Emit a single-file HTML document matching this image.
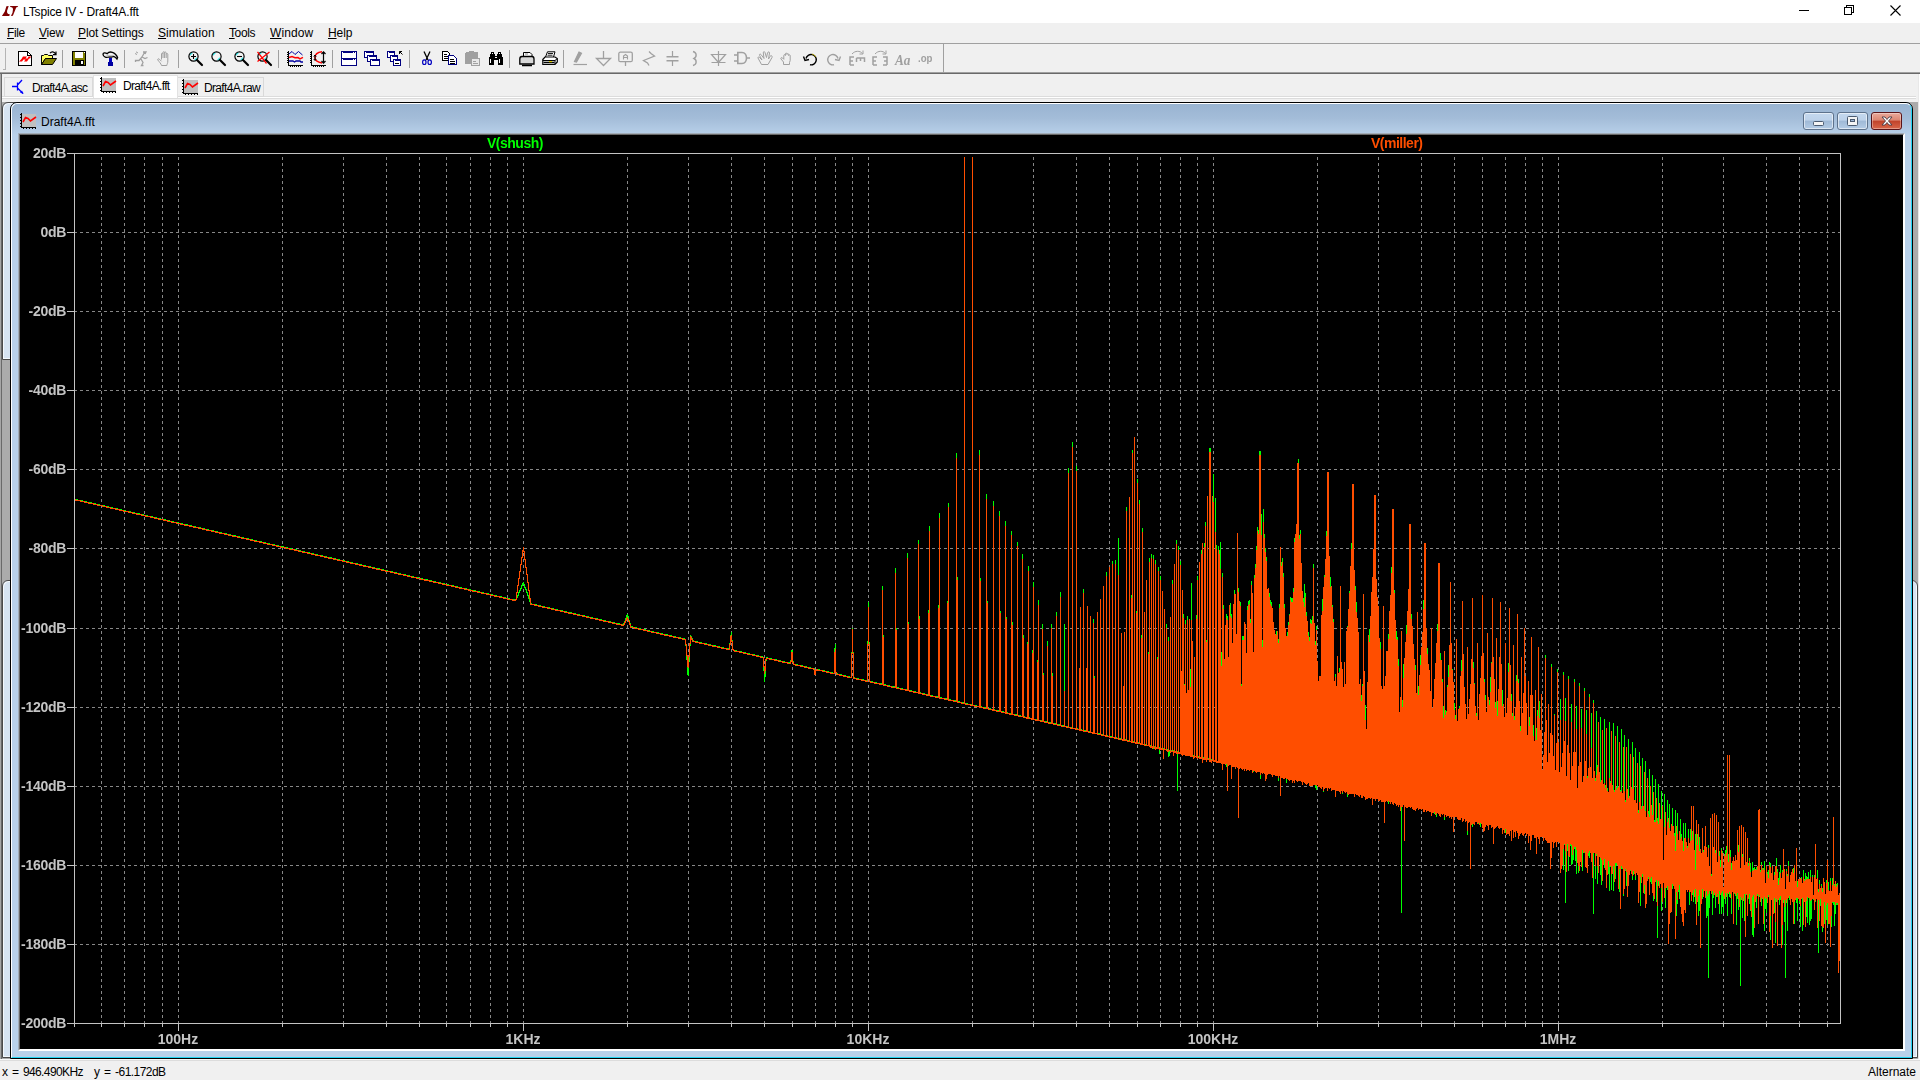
<!DOCTYPE html>
<html><head><meta charset="utf-8"><title>LTspice IV - Draft4A.fft</title>
<style>
*{box-sizing:border-box;margin:0;padding:0}
html,body{width:1920px;height:1080px;overflow:hidden;background:#f0f0f0;font-family:"Liberation Sans",sans-serif;}
body{position:relative}
.abs{position:absolute}
.ic{position:absolute;overflow:visible}
#title{position:absolute;left:0;top:0;width:1920px;height:23px;background:#fff}
#title .t{position:absolute;left:23px;top:5px;font-size:12px;line-height:14px;color:#000;white-space:nowrap;letter-spacing:-0.13px}
#menu{position:absolute;left:0;top:23px;width:1920px;height:20px;background:#f0f0f0;font-size:12px;color:#000}
#menu span{position:absolute;top:3px;line-height:14px;white-space:nowrap}
#menu u{text-decoration:underline;text-underline-offset:1px}
#tb{position:absolute;left:0;top:43px;width:1920px;height:31px;background:#f0f0f0;border-top:1px solid #a0a0a0;border-bottom:1px solid #696969}
#tbl{position:absolute;left:0;top:72px;width:1920px;height:1px;background:#a0a0a0}
.sep{position:absolute;top:50px;width:1px;height:18px;background:#a0a0a0}
#grip{position:absolute;left:5px;top:48px;width:1px;height:22px;background:#b4b4b4}
#grip2{position:absolute;left:3px;top:69px;width:3px;height:1px;background:#b4b4b4}
#tbend{position:absolute;left:943px;top:44px;width:1px;height:29px;background:#a0a0a0}
#tabs{position:absolute;left:2px;top:74px;width:1916px;height:28px;background:#f0f0f0}
.tab{position:absolute;top:77px;height:20px;border:1px solid #d9d9d9;background:#f0f0f0;font-size:12px;letter-spacing:-0.66px;color:#000;white-space:nowrap}
.tab span{position:absolute;top:3px;line-height:14px}
.tab.sel{top:75px;height:23px;background:#fff;border-bottom:none;border-color:#e2e2e2}
#ledge0{position:absolute;left:0;top:74px;width:1px;height:987px;background:#a6a6a6}
#ledge1{position:absolute;left:1px;top:74px;width:1px;height:987px;background:#696969}
#redge{position:absolute;left:1918px;top:74px;width:2px;height:987px;background:#fff;border-left:1px solid #e8e8e8}
#mdi{position:absolute;left:2px;top:102px;width:1916px;height:957px;background:#ababab}
#bline{position:absolute;left:0;top:1059px;width:1920px;height:2px;background:#fafafa;border-bottom:1px solid #dcdcdc}
#status{position:absolute;left:0;top:1061px;width:1920px;height:19px;background:#f0f0f0;font-size:12px;color:#000}
#status span{position:absolute;top:4px;line-height:14px;white-space:nowrap}
.bw{position:absolute;border:1px solid #4a4a4a;border-radius:6px 6px 0 0;background:#d7e4f2;box-shadow:inset 1px 1px 0 #f4f8fc,inset -1px -1px 0 #f4f8fc}
#cw{position:absolute;left:10px;top:102px;width:1903px;height:957px;border:1px solid #000;border-radius:7px 7px 0 0;background:#b9d1ea;overflow:hidden}
#cw .hl{position:absolute;left:0;top:0;width:1901px;height:955px;border-left:1px solid #fff;border-top:1px solid #fff;border-right:1px solid #22d4f2;border-bottom:1px solid #22d4f2;border-radius:6px 6px 0 0}
#cap{position:absolute;left:1px;top:1px;width:1899px;height:31px;background:linear-gradient(#99b4d1,#a3bcd8 45%,#b9d1ea);border-radius:5px 5px 0 0}
#cap .ct{position:absolute;left:29px;top:11px;font-size:12px;line-height:14px;color:#000;white-space:nowrap}
#cedge{position:absolute;left:7px;top:30px;width:1887px;height:918px;border-left:1px solid #a3adb8;border-top:1px solid #a3adb8;border-right:1px solid #fff;border-bottom:1px solid #fff}
#cedge2{position:absolute;left:8px;top:31px;width:1885px;height:916px;border-left:1px solid #696969;border-top:1px solid #696969;border-right:1px solid #fff;border-bottom:1px solid #fff;background:#000}
.cb{position:absolute;top:112px;width:31px;height:18px;border:1px solid #5d728c;border-radius:3px;background:linear-gradient(#c4d8ee 0%,#bdd2ea 45%,#9fb9d6 50%,#b4cce6 100%);box-shadow:inset 0 0 0 1px rgba(255,255,255,.55)}
.cb.x{border-color:#5a1418;background:linear-gradient(#eaa99b 0%,#dc8672 45%,#c0432a 50%,#d9674a 100%);box-shadow:inset 0 0 0 1px rgba(255,255,255,.35)}
.plot{position:absolute;left:20px;top:135px}
.yl{position:absolute;left:0;width:66px;text-align:right;font-size:14px;font-weight:bold;color:#c4c4c4;line-height:16px;height:16px;white-space:nowrap;letter-spacing:-0.3px;will-change:transform}
.xl{position:absolute;top:1031px;width:80px;text-align:center;font-size:14px;font-weight:bold;color:#c4c4c4;line-height:16px;white-space:nowrap;letter-spacing:0;will-change:transform}
.tl{position:absolute;top:135px;font-size:14px;font-weight:bold;line-height:16px;white-space:nowrap;letter-spacing:-0.5px;will-change:transform}

</style></head>
<body>
<div id="title">
<svg class="ic" style="left:0px;top:0px" width="22" height="22" viewBox="0 0 22 22"><path d="M6.4 6.2L8.7 6L7.1 10.8C6.7 13 7.8 14.5 9.8 14.3L9.3 16H1.9L4.8 11.6Z" fill="#800000"/><path d="M10.4 6.1H18.2L17.5 7.1L16.2 7.5L12.9 15.7L10.9 16L12.5 12.8L13 9.2C12.9 7.6 11.6 6.9 10 7.1Z" fill="#800000"/></svg>
<div class="t">LTspice IV - Draft4A.fft</div>
<svg class="ic" style="left:1799px;top:10px" width="10" height="1" viewBox="0 0 10 1" shape-rendering="crispEdges"><rect width="10" height="1" fill="#000"/></svg>
<svg class="ic" style="left:1844px;top:5px" width="10" height="10" viewBox="0 0 10 10" shape-rendering="crispEdges"><path d="M2.5 2.5V0.5H9.5V7.5H7.5" fill="none" stroke="#000"/><rect x="0.5" y="2.5" width="7" height="7" fill="#fff" stroke="#000"/></svg>
<svg class="ic" style="left:1890px;top:5px" width="11" height="11" viewBox="0 0 11 11"><path d="M0.5 0.5L10.5 10.5M10.5 0.5L0.5 10.5" stroke="#000" stroke-width="1.1" fill="none"/></svg>
</div>
<div id="menu"><span style="left:7px;letter-spacing:-0.4px"><u>F</u>ile</span><span style="left:39px;letter-spacing:-0.25px"><u>V</u>iew</span><span style="left:78px;letter-spacing:-0.13px"><u>P</u>lot Settings</span><span style="left:158px;letter-spacing:0.06px"><u>S</u>imulation</span><span style="left:229px;letter-spacing:-0.4px"><u>T</u>ools</span><span style="left:270px;letter-spacing:0.1px"><u>W</u>indow</span><span style="left:328px;letter-spacing:-0.1px"><u>H</u>elp</span></div>
<div id="tb"></div><div id="tbl"></div><div id="grip"></div><div id="grip2"></div><div id="tbend"></div>
<svg class="ic" style="left:18px;top:51px" width="16" height="16" viewBox="0 0 16 16" shape-rendering="crispEdges"><path d="M0.5 0.5H9.5L13.5 4.5V14.5H0.5Z" fill="#fff" stroke="#000"/><path d="M9.5 0.5V4.5H13.5" fill="none" stroke="#000"/><path d="M1 10.5L3.5 8L5 5.5H9L7.5 7.5H9.5L10.5 5.5H13L12 7.5H11L9 10.5H6L7.5 8.5H5.5L4 10.5Z" fill="#f00" shape-rendering="geometricPrecision"/></svg>
<svg class="ic" style="left:41px;top:51px" width="16" height="16" viewBox="0 0 16 16" shape-rendering="crispEdges"><path d="M0.5 4.5H2.5L3.5 3.5H6.5L7.5 4.5H11.5V7.5H4.5L0.5 13.5Z" fill="#ffff60" stroke="#000" shape-rendering="geometricPrecision"/><path d="M0.5 13.5L4.5 7.5H15.5L11.5 13.5Z" fill="#808000" stroke="#000" shape-rendering="geometricPrecision"/><path d="M9 2.2C10.5 0.2 13 0.4 14.6 3M15 0.6V3.6H12" fill="none" stroke="#000" stroke-width="1.2" shape-rendering="geometricPrecision"/></svg>
<div class="sep" style="left:62px"></div>
<svg class="ic" style="left:72px;top:51px" width="16" height="16" viewBox="0 0 16 16" shape-rendering="crispEdges"><rect x="0.5" y="0.5" width="13" height="14" fill="#808000" stroke="#000"/><rect x="3" y="1" width="8" height="6" fill="#fff"/><rect x="3" y="9" width="9" height="5" fill="#000"/><rect x="9" y="10" width="2" height="3" fill="#fff"/><rect x="12" y="1" width="1" height="1" fill="#fff"/></svg>
<div class="sep" style="left:93px"></div>
<svg class="ic" style="left:102px;top:51px" width="16" height="16" viewBox="0 0 16 16" shape-rendering="crispEdges"><path d="M1 3.2C1.2 1.6 3.2 1.6 5.2 2.6C7.6 -0.2 13.2 0.6 15.6 6.6L15 8C13 5.4 11 5 9.8 6H6.8C4.8 6.8 1.2 6.4 1 3.2Z" fill="#f0f0f0" stroke="#000" stroke-width="1.3" shape-rendering="geometricPrecision"/><path d="M4.5 4.8H11" stroke="#b0b0b0" stroke-width="1" shape-rendering="geometricPrecision"/><rect x="7" y="7" width="3" height="5" fill="#0000c0"/><rect x="6" y="11" width="5" height="4" fill="#0000a0"/></svg>
<div class="sep" style="left:124px"></div>
<svg class="ic" style="left:134px;top:51px" width="16" height="16" viewBox="0 0 16 16" shape-rendering="crispEdges"><g fill="none" stroke="#a0a0a0" stroke-width="1.3" shape-rendering="geometricPrecision"><path d="M10.5 1.5L8 6L5 9.5H1.5V11M8 6L11 7.5L13.5 6.5M7 8L9 11.5L7.5 14.5H9.5M9 1H12L11 3"/><path d="M1 2.5L3 3.5M2 0.8L4 2" stroke-width="1"/></g></svg>
<svg class="ic" style="left:157px;top:51px" width="16" height="16" viewBox="0 0 16 16"><path d="M4.5 8.5V3C4.5 1.8 6 1.8 6 3V7M6 3V1.5C6 0.4 7.6 0.4 7.6 1.5V7M7.6 2V1.8C7.6 0.8 9.2 0.8 9.2 2V7M9.2 3.2C9.2 2.2 10.8 2.2 10.8 3.2V10C10.8 12.5 10 13 9.8 14.5H4.5C4.3 13 2 10.5 0.8 9C0.3 8 1.5 7.3 2.4 8.2L4.5 10.3" fill="none" stroke="#a0a0a0" stroke-width="1" shape-rendering="geometricPrecision"/></svg>
<div class="sep" style="left:178px"></div>
<svg class="ic" style="left:188px;top:51px" width="16" height="16" viewBox="0 0 16 16"><g shape-rendering="geometricPrecision"><circle cx="5.5" cy="5.5" r="4.6" fill="#f4f4f4" stroke="#000" stroke-width="1.2"/><path d="M2.2 4.2A3.6 3.6 0 0 1 4.4 2.1M8.8 6.8A3.6 3.6 0 0 1 6.6 8.9" stroke="#20e0e0" stroke-width="1.1" fill="none"/><path d="M9 9L14 14" stroke="#000" stroke-width="2.2" stroke-linecap="round"/><path d="M3 5.5H8M5.5 3V8" stroke="#000" stroke-width="1.1"/></g></svg>
<svg class="ic" style="left:211px;top:51px" width="16" height="16" viewBox="0 0 16 16"><g shape-rendering="geometricPrecision"><circle cx="5.5" cy="5.5" r="4.6" fill="#f4f4f4" stroke="#000" stroke-width="1.2"/><path d="M2.2 4.2A3.6 3.6 0 0 1 4.4 2.1M8.8 6.8A3.6 3.6 0 0 1 6.6 8.9" stroke="#20e0e0" stroke-width="1.1" fill="none"/><path d="M9 9L14 14" stroke="#000" stroke-width="2.2" stroke-linecap="round"/></g></svg>
<svg class="ic" style="left:234px;top:51px" width="16" height="16" viewBox="0 0 16 16"><g shape-rendering="geometricPrecision"><circle cx="5.5" cy="5.5" r="4.6" fill="#f4f4f4" stroke="#000" stroke-width="1.2"/><path d="M2.2 4.2A3.6 3.6 0 0 1 4.4 2.1M8.8 6.8A3.6 3.6 0 0 1 6.6 8.9" stroke="#20e0e0" stroke-width="1.1" fill="none"/><path d="M9 9L14 14" stroke="#000" stroke-width="2.2" stroke-linecap="round"/><path d="M3 5.5H8" stroke="#000" stroke-width="1.1"/></g></svg>
<svg class="ic" style="left:257px;top:51px" width="16" height="16" viewBox="0 0 16 16"><g shape-rendering="geometricPrecision"><circle cx="5.5" cy="5.5" r="4.6" fill="#f4f4f4" stroke="#000" stroke-width="1.2"/><path d="M2.2 4.2A3.6 3.6 0 0 1 4.4 2.1M8.8 6.8A3.6 3.6 0 0 1 6.6 8.9" stroke="#20e0e0" stroke-width="1.1" fill="none"/><path d="M9 9L14 14" stroke="#000" stroke-width="2.2" stroke-linecap="round"/><path d="M0.5 0.8L9.5 12.5M0.5 10.5L12.5 1" stroke="#f00" stroke-width="1.3"/></g></svg>
<div class="sep" style="left:278px"></div>
<svg class="ic" style="left:287px;top:51px" width="16" height="16" viewBox="0 0 16 16" shape-rendering="crispEdges"><path d="M1.5 0V14.5H16M0 1.5H1M0 3.5H1M0 5.5H1M0 7.5H1M0 9.5H1M0 11.5H1M3.5 15V16M5.5 15V16M7.5 15V16M9.5 15V16M11.5 15V16M13.5 15V16" stroke="#000" fill="none"/><g shape-rendering="geometricPrecision" fill="none"><path d="M2 3L5 0.5L8 3.5L11.5 0.5L15.5 4" stroke="#0000a0" stroke-width="1"/><path d="M2 6.5L5 5.5L8 6.8L11 6.5L13 7.8L16 6.3" stroke="#f00" stroke-width="1.5"/><path d="M2 10H6L7.5 11L9 10H13L14 11H16" stroke="#0000a0" stroke-width="1.3"/></g></svg>
<svg class="ic" style="left:310px;top:51px" width="16" height="16" viewBox="0 0 16 16" shape-rendering="crispEdges"><path d="M1.5 0V14.5H16M0 1.5H1M0 3.5H1M0 5.5H1M0 7.5H1M0 9.5H1M0 11.5H1M3.5 15V16M5.5 15V16M7.5 15V16M9.5 15V16M11.5 15V16M13.5 15V16" stroke="#000" fill="none"/><g shape-rendering="geometricPrecision" fill="none"><path d="M12 0.8C6 1.5 5 5 5 6.5C5 8 6 11 12 12" stroke="#f00" stroke-width="1.4"/><path d="M13.5 1V12M11.5 3L13.5 0.8L15.5 3M11.5 10L13.5 12.2L15.5 10" stroke="#000" stroke-width="1.2"/><path d="M5 4.5V9M3.8 5.5L5 4L6.2 5.5M3.8 8L5 9.5L6.2 8" stroke="#000" stroke-width="1"/></g></svg>
<div class="sep" style="left:332px"></div>
<svg class="ic" style="left:341px;top:51px" width="16" height="16" viewBox="0 0 16 16" shape-rendering="crispEdges"><rect x="0.5" y="0.5" width="15" height="7" fill="#fff" stroke="#000080"/><rect x="0" y="0" width="16" height="2" fill="#000080"/><rect x="1" y="1" width="1" height="1" fill="#fff"/><rect x="0.5" y="7.5" width="15" height="7" fill="#fff" stroke="#000080"/><rect x="0" y="7" width="16" height="2" fill="#000080"/><rect x="1" y="8" width="1" height="1" fill="#fff"/><rect x="12" y="1" width="1" height="1" fill="#fff"/><rect x="14" y="1" width="1" height="1" fill="#fff"/><rect x="12" y="8" width="1" height="1" fill="#fff"/><rect x="14" y="8" width="1" height="1" fill="#fff"/></svg>
<svg class="ic" style="left:364px;top:51px" width="16" height="16" viewBox="0 0 16 16" shape-rendering="crispEdges"><rect x="0.5" y="0.5" width="9" height="6" fill="#fff" stroke="#000080"/><rect x="0" y="0" width="10" height="2" fill="#000080"/><rect x="1" y="1" width="1" height="1" fill="#fff"/><rect x="3.5" y="4.5" width="9" height="6" fill="#fff" stroke="#000080"/><rect x="3" y="4" width="10" height="2" fill="#000080"/><rect x="4" y="5" width="1" height="1" fill="#fff"/><rect x="6.5" y="8.5" width="9" height="6" fill="#fff" stroke="#000080"/><rect x="6" y="8" width="10" height="2" fill="#000080"/><rect x="7" y="9" width="1" height="1" fill="#fff"/></svg>
<svg class="ic" style="left:387px;top:51px" width="16" height="16" viewBox="0 0 16 16" shape-rendering="crispEdges"><rect x="0.5" y="0.5" width="7" height="6" fill="#fff" stroke="#000080"/><rect x="0" y="0" width="8" height="2" fill="#000080"/><rect x="1" y="1" width="1" height="1" fill="#fff"/><rect x="3.5" y="4.5" width="7" height="6" fill="#fff" stroke="#000080"/><rect x="3" y="4" width="8" height="2" fill="#000080"/><rect x="4" y="5" width="1" height="1" fill="#fff"/><rect x="6.5" y="8.5" width="7" height="6" fill="#fff" stroke="#000080"/><rect x="6" y="8" width="8" height="2" fill="#000080"/><rect x="7" y="9" width="1" height="1" fill="#fff"/><rect x="8" y="12" width="4" height="1" fill="#000"/><path d="M12.5 0.5H15M12.5 0.5V3M12.5 0.5L15.5 3.5" stroke="#000" fill="none" shape-rendering="geometricPrecision"/></svg>
<div class="sep" style="left:409px"></div>
<svg class="ic" style="left:419px;top:51px" width="16" height="16" viewBox="0 0 16 16" shape-rendering="crispEdges"><g shape-rendering="geometricPrecision" fill="none"><path d="M5 0.5L9 9M11 0.5L7 9" stroke="#000" stroke-width="1.3"/><ellipse cx="5.3" cy="11.2" rx="1.7" ry="2.3" stroke="#0000c0" stroke-width="1.2"/><ellipse cx="10.7" cy="11.2" rx="1.7" ry="2.3" stroke="#0000c0" stroke-width="1.2"/></g></svg>
<svg class="ic" style="left:442px;top:51px" width="16" height="16" viewBox="0 0 16 16" shape-rendering="crispEdges"><path d="M0.5 0.5H5.5L7.5 2.5V9.5H0.5Z" fill="#fff" stroke="#000"/><path d="M2 3.5H5M2 5.5H6M2 7.5H6" stroke="#000"/><path d="M6.5 4.5H11.5L14.5 7.5V13.5H6.5Z" fill="#fff" stroke="#000080"/><path d="M8 8.5H12M8 10.5H13M8 12.5H13" stroke="#000"/></svg>
<svg class="ic" style="left:465px;top:51px" width="16" height="16" viewBox="0 0 16 16" shape-rendering="crispEdges"><rect x="0.5" y="1.5" width="12" height="11" rx="1.5" fill="#a0a0a0" stroke="#a0a0a0"/><rect x="4" y="0" width="5" height="3" fill="#a0a0a0"/><rect x="6.5" y="7.5" width="8" height="7" fill="#e8e8e8" stroke="#a0a0a0"/><path d="M8 10.5H11M8 12.5H13" stroke="#a0a0a0"/></svg>
<svg class="ic" style="left:488px;top:51px" width="16" height="16" viewBox="0 0 16 16" shape-rendering="crispEdges"><path d="M3 1H6V3H7V5H9V3H10V1H13V3H14V6H15V14H10V9H6V14H1V6H2V3H3Z" fill="#000"/><rect x="4" y="2" width="1" height="1" fill="#fff"/><rect x="11" y="2" width="1" height="1" fill="#fff"/><rect x="2" y="8" width="1" height="4" fill="#fff"/><rect x="11" y="8" width="1" height="4" fill="#fff"/><rect x="7" y="6" width="2" height="1" fill="#fff"/></svg>
<div class="sep" style="left:509px"></div>
<svg class="ic" style="left:519px;top:51px" width="16" height="16" viewBox="0 0 16 16"><g shape-rendering="geometricPrecision"><path d="M4.5 5.5V1.5H11L13 3.5V5.5" fill="#fff" stroke="#000"/><path d="M0.8 13V8C0.8 6 2 5.5 3 5.5H13C14.5 5.5 15 6.5 15 8V13Z" fill="#d8d8d8" stroke="#000" stroke-width="1.3"/><path d="M3 14.5H13" stroke="#000" stroke-width="1.5"/><path d="M6 3H9" stroke="#888"/></g></svg>
<svg class="ic" style="left:542px;top:51px" width="16" height="16" viewBox="0 0 16 16"><g shape-rendering="geometricPrecision"><path d="M3.5 6L5.5 0.8H13L11.5 6" fill="#fff" stroke="#000"/><path d="M6 2.5H11M5.5 4.2H10.5" stroke="#000" stroke-width="0.9"/><path d="M0.8 8.5L3 6H13L15.3 7.5V11L13 13.5H0.8Z" fill="#fff" stroke="#000" stroke-width="1.2"/><path d="M0.8 9.5H13L15 7.8M13 9.5V13" stroke="#000" fill="none"/><path d="M1.5 11.5H12.5" stroke="#000" stroke-width="1.6"/><rect x="7" y="10" width="3" height="1.2" fill="#e0d000"/></g></svg>
<div class="sep" style="left:563px"></div>
<svg class="ic" style="left:573px;top:51px" width="16" height="16" viewBox="0 0 16 16"><g fill="none" stroke="#a0a0a0" stroke-width="1.2" shape-rendering="geometricPrecision"><path d="M0.5 13.5H14"/><path d="M1.5 10.5L6 1L8.5 2.3L3.5 11Z" fill="#a0a0a0"/></g></svg>
<svg class="ic" style="left:596px;top:51px" width="16" height="16" viewBox="0 0 16 16"><g fill="none" stroke="#a0a0a0" stroke-width="1.3" shape-rendering="geometricPrecision"><path d="M7.5 0V7.5M0.5 7.5H14.5L7.5 14.5Z"/></g></svg>
<svg class="ic" style="left:618px;top:51px" width="16" height="16" viewBox="0 0 16 16"><g fill="none" stroke="#a0a0a0" stroke-width="1.3" shape-rendering="geometricPrecision"><rect x="0.8" y="1.2" width="13.5" height="9.5" rx="1.5"/><path d="M7.5 11V15"/><path d="M5.5 8.5V5L7.5 3.5L9.5 5V8.5M5.5 6.5H9.5" stroke-width="1.1"/></g></svg>
<svg class="ic" style="left:642px;top:51px" width="16" height="16" viewBox="0 0 16 16"><g fill="none" stroke="#a0a0a0" stroke-width="1.3" shape-rendering="geometricPrecision"><path d="M7 0.5L9 2.5L12.5 5L1.5 9.5L5.5 12L7 14.5"/></g></svg>
<svg class="ic" style="left:665px;top:51px" width="16" height="16" viewBox="0 0 16 16"><g fill="none" stroke="#a0a0a0" stroke-width="1.2" shape-rendering="geometricPrecision"><path d="M7.5 0V5.5M7.5 10V15"/><path d="M1.5 5.8H13.5M1.5 9.7H13.5" stroke-width="1.6"/></g></svg>
<svg class="ic" style="left:689px;top:51px" width="16" height="16" viewBox="0 0 16 16"><g fill="none" stroke="#a0a0a0" stroke-width="1.4" shape-rendering="geometricPrecision"><path d="M4 0.5C8 1.5 8 6 5 7.5C8 9 8 13.5 4 14.5"/></g></svg>
<svg class="ic" style="left:711px;top:51px" width="16" height="16" viewBox="0 0 16 16"><g fill="none" stroke="#a0a0a0" stroke-width="1.2" shape-rendering="geometricPrecision"><path d="M7.5 0V15M0.5 3.5H14.5L7.5 11.5ZM0.5 11.5H14.5"/></g></svg>
<svg class="ic" style="left:734px;top:51px" width="16" height="16" viewBox="0 0 16 16"><g fill="none" stroke="#a0a0a0" stroke-width="1.6" shape-rendering="geometricPrecision"><path d="M0 4H3.5M0 10H3.5M12.5 7H16M3.8 1.5H8C14 1.5 14 12.5 8 12.5H3.8Z" stroke-width="1.6"/></g></svg>
<svg class="ic" style="left:757px;top:51px" width="16" height="16" viewBox="0 0 16 16"><g fill="none" stroke="#a0a0a0" stroke-width="1" shape-rendering="geometricPrecision"><path d="M1 7L4.5 13.5H11L15 6.5C15.5 4.5 14 4 13 5.5L11.5 8L12.5 2C12.5 0.5 11 0.5 10.5 2L9.5 6.5L8 1.5C7.5 0 6 0.5 6.3 2L7 7.5L4 3.5C3 2.5 2 3.5 2.6 4.5L5 9L2.5 6.5C1.5 5.8 0.5 6.2 1 7Z"/></g></svg>
<svg class="ic" style="left:780px;top:51px" width="16" height="16" viewBox="0 0 16 16"><g fill="none" stroke="#a0a0a0" stroke-width="1" shape-rendering="geometricPrecision"><path d="M3.5 13.5V11L1 8C0.3 6.8 1.8 6 2.6 7L3.8 8.3V4.5C3.8 3.3 5.4 3.3 5.4 4.5V3C5.4 1.8 7 1.8 7 3V3.5C7 2.3 8.6 2.3 8.6 3.5V4.5C8.6 3.6 10.2 3.6 10.2 4.5V9.5L9.5 11.5V13.5Z"/></g></svg>
<svg class="ic" style="left:803px;top:51px" width="16" height="16" viewBox="0 0 16 16"><g fill="none" shape-rendering="geometricPrecision"><path d="M3 7.5A5.2 5.2 0 1 1 7 13.8" stroke="#000" stroke-width="1.4"/><path d="M0.5 5.5L2 9.5L6 8.5" stroke="#000" stroke-width="1.4"/><path d="M12.8 6A5.2 5.2 0 0 0 9 3" stroke="#c0b000" stroke-width="0.8"/></g></svg>
<svg class="ic" style="left:826px;top:51px" width="16" height="16" viewBox="0 0 16 16"><g fill="none" stroke="#a0a0a0" stroke-width="1.4" shape-rendering="geometricPrecision"><path d="M12 7.5A5.2 5.2 0 1 0 8 13.8M14.5 5.5L13 9.5L9 8.5"/></g></svg>
<svg class="ic" style="left:849px;top:50px" width="16" height="16" viewBox="0 0 16 16"><g fill="none" stroke="#a0a0a0" stroke-width="1.2" shape-rendering="geometricPrecision"><path d="M1 15V7H5M1 11H4M1 15H5" stroke-width="1.5"/><path d="M7.5 8V12M7.5 8H15.5V12M11.5 8V11" stroke-width="1.5"/><path d="M3 4C6 0.5 11 0.5 13.5 3.5M14 0.5V4H10.5" stroke-width="1"/></g></svg>
<svg class="ic" style="left:872px;top:50px" width="16" height="16" viewBox="0 0 16 16"><g fill="none" stroke="#a0a0a0" stroke-width="1.2" shape-rendering="geometricPrecision"><path d="M1 15V7H5M1 11H4M1 15H5" stroke-width="1.5"/><path d="M15 15V7H11M15 11H12M15 15H11" stroke-width="1.5"/><path d="M3 4C6 0.5 11 0.5 13.5 3.5M14 0.5V4H10.5" stroke-width="1"/></g></svg>
<svg class="ic" style="will-change:transform;left:895px;top:51px" width="16" height="16" viewBox="0 0 16 16"><text x="0" y="13.5" font-family="Liberation Serif" font-style="italic" font-weight="bold" font-size="15" fill="#a0a0a0" textLength="15.5" lengthAdjust="spacingAndGlyphs">Aa</text></svg>
<svg class="ic" style="will-change:transform;left:918px;top:51px" width="16" height="16" viewBox="0 0 16 16"><text x="0" y="11" font-family="Liberation Sans" font-weight="bold" font-size="11" fill="#a0a0a0" textLength="14.5" lengthAdjust="spacingAndGlyphs">.op</text></svg>
<div id="tabs"></div><div class="abs" style="left:2px;top:96px;width:1914px;height:3px;background:#fff;border-top:1px solid #dcdcdc;border-bottom:1px solid #dcdcdc"></div>
<div class="tab" style="left:4px;width:89px"><span style="left:27px">Draft4A.asc</span></div>
<div class="tab" style="left:177px;width:87px"><span style="left:26px">Draft4A.raw</span></div>
<div class="tab sel" style="left:93px;width:85px"><span style="left:29px;top:3px">Draft4A.fft</span></div>
<svg class="ic" style="left:12px;top:79px" width="16" height="16" viewBox="0 0 16 16" shape-rendering="geometricPrecision"><path d="M0 7.5H5.5M5.5 3.5V11.5M5.5 6L10 1M5.5 9L11 14.5" stroke="#0000ff" stroke-width="1.3" fill="none"/><path d="M11.5 15L8 13.5L10 11.5Z" fill="#0000ff"/></svg><svg class="ic " style="left:100px;top:77px" width="16" height="16" viewBox="0 0 16 16" shape-rendering="crispEdges"><rect x="2" y="1" width="14" height="13" fill="#c0c0c0"/><path d="M1.5 0V14.5H16M0 1.5H1M0 4.5H1M0 7.5H1M0 10.5H1M0 13.5H1M3.5 15V16M6.5 15V16M9.5 15V16M12.5 15V16M15.5 15V16" stroke="#000" fill="none"/><path d="M3 9L5.5 4.5L8 5.5L10.5 8L16 4" stroke="#f00" stroke-width="1.6" fill="none" shape-rendering="geometricPrecision"/></svg><svg class="ic " style="left:182px;top:79px" width="16" height="16" viewBox="0 0 16 16" shape-rendering="crispEdges"><rect x="2" y="1" width="14" height="13" fill="#c0c0c0"/><path d="M1.5 0V14.5H16M0 1.5H1M0 4.5H1M0 7.5H1M0 10.5H1M0 13.5H1M3.5 15V16M6.5 15V16M9.5 15V16M12.5 15V16M15.5 15V16" stroke="#000" fill="none"/><path d="M3 9L5.5 4.5L8 5.5L10.5 8L16 4" stroke="#f00" stroke-width="1.6" fill="none" shape-rendering="geometricPrecision"/></svg>
<div id="ledge0"></div><div id="ledge1"></div><div id="redge"></div>
<div id="mdi"></div>
<div class="bw" style="left:2px;top:102px;width:900px;height:258px"></div>
<div class="bw" style="left:2px;top:580px;width:1916px;height:478px"></div>
<div id="cw"><div id="cap"><div class="ct">Draft4A.fft</div></div><div class="hl"></div><div id="cedge"></div><div id="cedge2"></div></div>
<svg class="ic " style="left:20px;top:113px" width="16" height="16" viewBox="0 0 16 16" shape-rendering="crispEdges"><rect x="2" y="1" width="14" height="13" fill="#c0c0c0"/><path d="M1.5 0V14.5H16M0 1.5H1M0 4.5H1M0 7.5H1M0 10.5H1M0 13.5H1M3.5 15V16M6.5 15V16M9.5 15V16M12.5 15V16M15.5 15V16" stroke="#000" fill="none"/><path d="M3 9L5.5 4.5L8 5.5L10.5 8L16 4" stroke="#f00" stroke-width="1.6" fill="none" shape-rendering="geometricPrecision"/></svg>
<div class="cb" style="left:1803px"><svg class="ic" style="left:9px;top:8px" width="11" height="5" viewBox="0 0 11 5"><rect x="0.5" y="0.5" width="10" height="4" rx="1" fill="#f4f4f4" stroke="#4a5a70"/></svg></div>
<div class="cb" style="left:1837px"><svg class="ic" style="left:9px;top:3px" width="11" height="10" viewBox="0 0 11 10"><rect x="0.5" y="0.5" width="10" height="9" rx="1" fill="#f4f4f4" stroke="#4a5a70"/><rect x="3.5" y="3.5" width="4" height="2" fill="#9db6d4" stroke="#4a5a70"/></svg></div>
<div class="cb x" style="left:1871px"><svg class="ic" style="left:9px;top:3px" width="12" height="10" viewBox="0 0 12 10"><path d="M1 1H4L6 3.5L8 1H11L7.5 5L11 9H8L6 6.5L4 9H1L4.5 5Z" fill="#fff" stroke="#4a3a44" stroke-width="0.9"/></svg></div>
<svg class="plot" width="1883" height="914" viewBox="20 135 1883 914" shape-rendering="crispEdges">
<rect x="20" y="135" width="1883" height="914" fill="#000"/>
<path d="M101.5 1024V154M124.5 1024V154M144.5 1024V154M162.5 1024V154M178.5 1024V154M282.5 1024V154M343.5 1024V154M386.5 1024V154M419.5 1024V154M446.5 1024V154M470.5 1024V154M490.5 1024V154M507.5 1024V154M523.5 1024V154M627.5 1024V154M688.5 1024V154M731.5 1024V154M764.5 1024V154M792.5 1024V154M815.5 1024V154M835.5 1024V154M852.5 1024V154M868.5 1024V154M972.5 1024V154M1033.5 1024V154M1076.5 1024V154M1109.5 1024V154M1137.5 1024V154M1160.5 1024V154M1180.5 1024V154M1197.5 1024V154M1213.5 1024V154M1317.5 1024V154M1378.5 1024V154M1421.5 1024V154M1454.5 1024V154M1482.5 1024V154M1505.5 1024V154M1525.5 1024V154M1542.5 1024V154M1558.5 1024V154M1662.5 1024V154M1723.5 1024V154M1766.5 1024V154M1799.5 1024V154M1827.5 1024V154" stroke="#878787" stroke-width="1" stroke-dasharray="3 3" fill="none"/>
<path d="M74 232.5H1840M74 311.5H1840M74 390.5H1840M74 469.5H1840M74 548.5H1840M74 628.5H1840M74 707.5H1840M74 786.5H1840M74 865.5H1840M74 944.5H1840" stroke="#878787" stroke-width="1" stroke-dasharray="3 3" fill="none"/>
<path d="M74.5 499v1M75.5 499v1M76.5 499v1M77.5 499v2M78.5 500v1M79.5 500v1M80.5 500v1M81.5 500v1M82.5 500v2M83.5 501v1M84.5 501v1M85.5 501v1M86.5 501v2M87.5 502v1M88.5 502v1M89.5 502v1M90.5 502v1M91.5 502v2M92.5 503v1M93.5 503v1M94.5 503v1M95.5 503v2M96.5 504v1M97.5 504v1M98.5 504v1M99.5 504v2M100.5 505v1M101.5 505v1M102.5 505v1M103.5 505v1M104.5 505v2M105.5 506v1M106.5 506v1M107.5 506v1M108.5 506v2M109.5 507v1M110.5 507v1M111.5 507v1M112.5 507v2M113.5 508v1M114.5 508v1M115.5 508v1M116.5 508v1M117.5 508v2M118.5 509v1M119.5 509v1M120.5 509v1M121.5 509v2M122.5 510v1M123.5 510v1M124.5 510v1M125.5 510v2M126.5 511v1M127.5 511v1M128.5 511v1M129.5 511v1M130.5 511v2M131.5 512v1M132.5 512v1M133.5 512v1M134.5 512v2M135.5 513v1M136.5 513v1M137.5 513v1M138.5 513v1M139.5 513v2M140.5 514v1M141.5 514v1M142.5 514v1M143.5 514v2M144.5 515v1M145.5 515v1M146.5 515v1M147.5 515v2M148.5 516v1M149.5 516v1M150.5 516v1M151.5 516v1M152.5 516v2M153.5 517v1M154.5 517v1M155.5 517v1M156.5 517v2M157.5 518v1M158.5 518v1M159.5 518v1M160.5 518v2M161.5 519v1M162.5 519v1M163.5 519v1M164.5 519v1M165.5 519v2M166.5 520v1M167.5 520v1M168.5 520v1M169.5 520v2M170.5 521v1M171.5 521v1M172.5 521v1M173.5 521v2M174.5 522v1M175.5 522v1M176.5 522v1M177.5 522v1M178.5 522v2M179.5 523v1M180.5 523v1M181.5 523v1M182.5 523v2M183.5 524v1M184.5 524v1M185.5 524v1M186.5 524v1M187.5 524v2M188.5 525v1M189.5 525v1M190.5 525v1M191.5 525v2M192.5 526v1M193.5 526v1M194.5 526v1M195.5 526v2M196.5 527v1M197.5 527v1M198.5 527v1M199.5 527v1M200.5 527v2M201.5 528v1M202.5 528v1M203.5 528v1M204.5 528v2M205.5 529v1M206.5 529v1M207.5 529v1M208.5 529v2M209.5 530v1M210.5 530v1M211.5 530v1M212.5 530v1M213.5 530v2M214.5 531v1M215.5 531v1M216.5 531v1M217.5 531v2M218.5 532v1M219.5 532v1M220.5 532v1M221.5 532v2M222.5 533v1M223.5 533v1M224.5 533v1M225.5 533v1M226.5 533v2M227.5 534v1M228.5 534v1M229.5 534v1M230.5 534v2M231.5 535v1M232.5 535v1M233.5 535v1M234.5 535v1M235.5 535v2M236.5 536v1M237.5 536v1M238.5 536v1M239.5 536v2M240.5 537v1M241.5 537v1M242.5 537v1M243.5 537v2M244.5 538v1M245.5 538v1M246.5 538v1M247.5 538v1M248.5 538v2M249.5 539v1M250.5 539v1M251.5 539v1M252.5 539v2M253.5 540v1M254.5 540v1M255.5 540v1M256.5 540v2M257.5 541v1M258.5 541v1M259.5 541v1M260.5 541v1M261.5 541v2M262.5 542v1M263.5 542v1M264.5 542v1M265.5 542v2M266.5 543v1M267.5 543v1M268.5 543v1M269.5 543v2M270.5 544v1M271.5 544v1M272.5 544v1M273.5 544v1M274.5 544v2M275.5 545v1M276.5 545v1M277.5 545v1M278.5 545v2M279.5 546v1M280.5 546v1M281.5 546v1M282.5 546v1M283.5 546v2M284.5 547v1M285.5 547v1M286.5 547v1M287.5 547v2M288.5 548v1M289.5 548v1M290.5 548v1M291.5 548v2M292.5 549v1M293.5 549v1M294.5 549v1M295.5 549v1M296.5 549v2M297.5 550v1M298.5 550v1M299.5 550v1M300.5 550v2M301.5 551v1M302.5 551v1M303.5 551v1M304.5 551v2M305.5 552v1M306.5 552v1M307.5 552v1M308.5 552v1M309.5 552v2M310.5 553v1M311.5 553v1M312.5 553v1M313.5 553v2M314.5 554v1M315.5 554v1M316.5 554v1M317.5 554v2M318.5 555v1M319.5 555v1M320.5 555v1M321.5 555v1M322.5 555v2M323.5 556v1M324.5 556v1M325.5 556v1M326.5 556v2M327.5 557v1M328.5 557v1M329.5 557v1M330.5 557v1M331.5 557v2M332.5 558v1M333.5 558v1M334.5 558v1M335.5 558v2M336.5 559v1M337.5 559v1M338.5 559v1M339.5 559v2M340.5 560v1M341.5 560v1M342.5 560v1M343.5 560v1M344.5 560v2M345.5 561v1M346.5 561v1M347.5 561v1M348.5 561v2M349.5 562v1M350.5 562v1M351.5 562v1M352.5 562v2M353.5 563v1M354.5 563v1M355.5 563v1M356.5 563v1M357.5 563v2M358.5 564v1M359.5 564v1M360.5 564v1M361.5 564v2M362.5 565v1M363.5 565v1M364.5 565v1M365.5 565v2M366.5 566v1M367.5 566v1M368.5 566v1M369.5 566v1M370.5 566v2M371.5 567v1M372.5 567v1M373.5 567v1M374.5 567v2M375.5 568v1M376.5 568v1M377.5 568v1M378.5 568v1M379.5 568v2M380.5 569v1M381.5 569v1M382.5 569v1M383.5 569v2M384.5 570v1M385.5 570v1M386.5 570v1M387.5 570v2M388.5 571v1M389.5 571v1M390.5 571v1M391.5 571v1M392.5 571v2M393.5 572v1M394.5 572v1M395.5 572v1M396.5 572v2M397.5 573v1M398.5 573v1M399.5 573v1M400.5 573v2M401.5 574v1M402.5 574v1M403.5 574v1M404.5 574v1M405.5 574v2M406.5 575v1M407.5 575v1M408.5 575v1M409.5 575v2M410.5 576v1M411.5 576v1M412.5 576v1M413.5 576v2M414.5 577v1M415.5 577v1M416.5 577v1M417.5 577v1M418.5 577v2M419.5 578v1M420.5 578v1M421.5 578v1M422.5 578v2M423.5 579v1M424.5 579v1M425.5 579v1M426.5 579v1M427.5 579v2M428.5 580v1M429.5 580v1M430.5 580v1M431.5 580v2M432.5 581v1M433.5 581v1M434.5 581v1M435.5 581v2M436.5 582v1M437.5 582v1M438.5 582v1M439.5 582v1M440.5 582v2M441.5 583v1M442.5 583v1M443.5 583v1M444.5 583v2M445.5 584v1M446.5 584v1M447.5 584v1M448.5 584v2M449.5 585v1M450.5 585v1M451.5 585v1M452.5 585v1M453.5 585v2M454.5 586v1M455.5 586v1M456.5 586v1M457.5 586v2M458.5 587v1M459.5 587v1M460.5 587v1M461.5 587v2M462.5 588v1M463.5 588v1M464.5 588v1M465.5 588v1M466.5 588v2M467.5 589v1M468.5 589v1M469.5 589v1M470.5 589v2M471.5 590v1M472.5 590v1M473.5 590v1M474.5 590v1M475.5 590v2M476.5 591v1M477.5 591v1M478.5 591v1M479.5 591v2M480.5 592v1M481.5 592v1M482.5 592v1M483.5 592v2M484.5 593v1M485.5 593v1M486.5 593v1M487.5 593v1M488.5 593v2M489.5 594v1M490.5 594v1M491.5 594v1M492.5 594v2M493.5 595v1M494.5 595v1M495.5 595v1M496.5 595v2M497.5 596v1M498.5 596v1M499.5 596v1M500.5 596v1M501.5 596v2M502.5 597v1M503.5 597v1M504.5 597v1M505.5 597v2M506.5 598v1M507.5 598v1M508.5 598v1M509.5 598v2M510.5 599v1M511.5 599v1M512.5 599v1M513.5 599v1M514.5 599v2M515.5 599v2M516.5 597v3M517.5 595v3M518.5 592v4M519.5 590v3M520.5 588v3M521.5 585v4M522.5 583v3M523.5 582v3M524.5 584v4M525.5 587v3M526.5 589v4M527.5 592v4M528.5 595v4M529.5 598v4M530.5 601v3M531.5 603v2M532.5 604v1M533.5 604v1M534.5 604v1M535.5 604v1M536.5 604v2M537.5 605v1M538.5 605v1M539.5 605v1M540.5 605v2M541.5 606v1M542.5 606v1M543.5 606v1M544.5 606v2M545.5 607v1M546.5 607v1M547.5 607v1M548.5 607v1M549.5 607v2M550.5 608v1M551.5 608v1M552.5 608v1M553.5 608v2M554.5 609v1M555.5 609v1M556.5 609v1M557.5 609v2M558.5 610v1M559.5 610v1M560.5 610v1M561.5 610v1M562.5 610v2M563.5 611v1M564.5 611v1M565.5 611v1M566.5 611v2M567.5 612v1M568.5 612v1M569.5 612v1M570.5 612v1M571.5 612v2M572.5 613v1M573.5 613v1M574.5 613v1M575.5 613v2M576.5 614v1M577.5 614v1M578.5 614v1M579.5 614v2M580.5 615v1M581.5 615v1M582.5 615v1M583.5 615v1M584.5 615v2M585.5 616v1M586.5 616v1M587.5 616v1M588.5 616v2M589.5 617v1M590.5 617v1M591.5 617v1M592.5 617v2M593.5 618v1M594.5 618v1M595.5 618v1M596.5 618v1M597.5 618v2M598.5 619v1M599.5 619v1M600.5 619v1M601.5 619v2M602.5 620v1M603.5 620v1M604.5 620v1M605.5 620v2M606.5 621v1M607.5 621v1M608.5 621v1M609.5 621v1M610.5 621v2M611.5 622v1M612.5 622v1M613.5 622v1M614.5 622v2M615.5 623v1M616.5 623v1M617.5 623v1M618.5 623v1M619.5 623v2M620.5 624v1M621.5 624v1M622.5 624v1M623.5 623v3M624.5 621v3M625.5 618v4M626.5 615v4M627.5 614v3M628.5 616v5M629.5 620v4M630.5 623v4M631.5 626v1M632.5 626v2M633.5 627v1M634.5 627v1M635.5 627v1M636.5 627v2M637.5 628v1M638.5 628v1M639.5 628v1M640.5 628v2M641.5 629v1M642.5 629v1M643.5 629v1M644.5 629v1M645.5 629v2M646.5 630v1M647.5 630v1M648.5 630v1M649.5 630v2M650.5 631v1M651.5 631v1M652.5 631v1M653.5 631v2M654.5 632v1M655.5 632v1M656.5 632v1M657.5 632v1M658.5 632v2M659.5 633v1M660.5 633v1M661.5 633v1M662.5 633v2M663.5 634v1M664.5 634v1M665.5 634v1M666.5 634v1M667.5 634v2M668.5 635v1M669.5 635v1M670.5 635v1M671.5 635v2M672.5 636v1M673.5 636v1M674.5 636v1M675.5 636v2M676.5 637v1M677.5 637v1M678.5 637v1M679.5 637v1M680.5 637v2M681.5 638v1M682.5 638v1M683.5 638v1M684.5 638v2M685.5 639v7M686.5 645v15M687.5 659v16M688.5 661v15M689.5 645v17M690.5 635v11M691.5 636v3M692.5 638v3M693.5 640v2M694.5 641v1M695.5 641v1M696.5 641v1M697.5 641v2M698.5 642v1M699.5 642v1M700.5 642v1M701.5 642v2M702.5 643v1M703.5 643v1M704.5 643v1M705.5 643v1M706.5 643v2M707.5 644v1M708.5 644v1M709.5 644v1M710.5 644v2M711.5 645v1M712.5 645v1M713.5 645v1M714.5 645v1M715.5 645v2M716.5 646v1M717.5 646v1M718.5 646v1M719.5 646v2M720.5 647v1M721.5 647v1M722.5 647v1M723.5 647v2M724.5 648v1M725.5 648v1M726.5 648v1M727.5 648v1M728.5 648v2M729.5 643v7M730.5 635v9M731.5 632v9M732.5 640v10M733.5 649v2M734.5 650v1M735.5 650v1M736.5 650v2M737.5 651v1M738.5 651v1M739.5 651v1M740.5 651v1M741.5 651v2M742.5 652v1M743.5 652v1M744.5 652v1M745.5 652v2M746.5 653v1M747.5 653v1M748.5 653v1M749.5 653v2M750.5 654v1M751.5 654v1M752.5 654v1M753.5 654v1M754.5 654v2M755.5 655v1M756.5 655v1M757.5 655v1M758.5 655v2M759.5 656v1M760.5 656v1M761.5 656v1M762.5 656v2M763.5 657v14M764.5 670v12M765.5 660v17M766.5 657v4M767.5 657v2M768.5 658v1M769.5 658v1M770.5 658v1M771.5 658v2M772.5 659v1M773.5 659v1M774.5 659v1M775.5 659v1M776.5 659v2M777.5 660v1M778.5 660v1M779.5 660v1M780.5 660v2M781.5 661v1M782.5 661v1M783.5 661v1M784.5 661v2M785.5 662v1M786.5 662v1M787.5 662v1M788.5 662v1M789.5 662v2M790.5 660v4M791.5 650v11M792.5 650v12M793.5 661v4M794.5 664v1M795.5 664v1M796.5 664v1M797.5 664v2M798.5 665v1M799.5 665v1M800.5 665v1M801.5 665v1M802.5 665v2M803.5 666v1M804.5 666v1M805.5 666v1M806.5 666v2M807.5 667v1M808.5 667v1M809.5 667v1M810.5 667v2M811.5 668v1M812.5 668v1M813.5 668v1M814.5 668v7M815.5 670v5M816.5 669v2M817.5 669v1M818.5 669v1M819.5 669v2M820.5 670v1M821.5 670v1M822.5 670v1M823.5 670v1M824.5 670v2M825.5 671v1M826.5 671v1M827.5 671v1M828.5 671v2M829.5 672v1M830.5 672v1M831.5 672v1M832.5 672v2M833.5 673v1M834.5 648v26M835.5 644v29M836.5 672v2M837.5 673v2M838.5 674v1M839.5 674v1M840.5 674v1M841.5 674v2M842.5 675v1M843.5 675v1M844.5 675v1M845.5 675v2M846.5 676v1M847.5 676v1M848.5 676v1M849.5 676v2M850.5 677v1M851.5 652v26M852.5 628v25M853.5 652v26M854.5 677v2M855.5 678v1M856.5 678v1M857.5 678v1M858.5 678v2M859.5 679v1M860.5 679v1M861.5 679v1M862.5 679v1M863.5 679v2M864.5 680v1M865.5 680v1M866.5 680v1M867.5 641v41M868.5 602v41M869.5 642v40M870.5 681v1M871.5 681v1M872.5 681v2M873.5 682v1M874.5 682v1M875.5 682v1M876.5 682v2M877.5 683v1M878.5 683v1M879.5 683v1M880.5 683v1M881.5 683v2M882.5 586v99M883.5 635v50M884.5 684v1M885.5 684v2M886.5 685v1M887.5 685v1M888.5 685v1M889.5 685v2M890.5 686v1M891.5 686v1M892.5 686v1M893.5 686v1M894.5 686v2M895.5 568v120M896.5 628v60M897.5 687v1M898.5 687v2M899.5 688v1M900.5 688v1M901.5 688v1M902.5 688v2M903.5 689v1M904.5 689v1M905.5 689v1M906.5 689v1M907.5 553v138M908.5 622v69M909.5 690v1M910.5 690v1M911.5 690v2M912.5 691v1M913.5 691v1M914.5 691v1M915.5 691v2M916.5 692v1M917.5 692v1M918.5 540v153M919.5 616v77M920.5 692v2M921.5 693v1M922.5 693v1M923.5 693v1M924.5 693v2M925.5 694v1M926.5 694v1M927.5 694v1M928.5 610v86M929.5 526v170M930.5 695v1M931.5 695v1M932.5 695v2M933.5 696v1M934.5 696v1M935.5 696v1M936.5 696v1M937.5 696v2M938.5 605v93M939.5 513v185M940.5 697v1M941.5 697v2M942.5 698v1M943.5 698v1M944.5 698v1M945.5 698v1M946.5 698v2M947.5 601v99M948.5 503v197M949.5 699v1M950.5 699v2M951.5 700v1M952.5 700v1M953.5 700v1M954.5 700v1M955.5 700v2M956.5 453v249M957.5 577v125M958.5 701v1M959.5 701v2M960.5 702v1M961.5 702v1M962.5 702v1M963.5 702v2M964.5 157v547M965.5 703v1M966.5 703v1M967.5 703v2M968.5 704v1M969.5 704v1M970.5 704v1M971.5 704v1M972.5 157v549M973.5 705v1M974.5 705v1M975.5 705v1M976.5 705v2M977.5 706v1M978.5 706v1M979.5 450v257M980.5 578v129M981.5 706v2M982.5 707v1M983.5 707v1M984.5 707v1M985.5 707v2M986.5 494v215M987.5 601v108M988.5 708v1M989.5 708v1M990.5 708v2M991.5 709v1M992.5 709v1M993.5 501v209M994.5 709v2M995.5 710v1M996.5 710v1M997.5 710v1M998.5 710v2M999.5 511v201M1000.5 611v101M1001.5 711v1M1002.5 711v1M1003.5 711v2M1004.5 712v1M1005.5 521v192M1006.5 617v96M1007.5 712v2M1008.5 713v1M1009.5 713v1M1010.5 713v1M1011.5 531v183M1012.5 622v93M1013.5 714v1M1014.5 714v1M1015.5 714v1M1016.5 714v2M1017.5 542v174M1018.5 715v1M1019.5 715v1M1020.5 715v2M1021.5 716v1M1022.5 554v163M1023.5 635v82M1024.5 716v2M1025.5 717v1M1026.5 717v1M1027.5 642v76M1028.5 566v152M1029.5 717v2M1030.5 718v1M1031.5 718v1M1032.5 650v69M1033.5 582v138M1034.5 719v1M1035.5 719v1M1036.5 719v1M1037.5 660v61M1038.5 600v121M1039.5 720v1M1040.5 720v1M1041.5 720v1M1042.5 624v98M1043.5 673v49M1044.5 721v1M1045.5 721v1M1046.5 721v2M1047.5 641v82M1048.5 722v1M1049.5 722v1M1050.5 722v2M1051.5 624v100M1052.5 673v51M1053.5 723v1M1054.5 723v1M1055.5 723v2M1056.5 612v113M1057.5 724v1M1058.5 724v1M1059.5 724v2M1060.5 592v134M1061.5 725v1M1062.5 725v1M1063.5 725v1M1064.5 624v103M1065.5 726v1M1066.5 726v1M1067.5 726v1M1068.5 468v260M1069.5 727v1M1070.5 727v1M1071.5 727v1M1072.5 442v287M1073.5 728v1M1074.5 728v1M1075.5 728v1M1076.5 466v263M1077.5 728v2M1078.5 729v1M1079.5 668v62M1080.5 607v123M1081.5 729v2M1082.5 730v1M1083.5 589v142M1084.5 730v1M1085.5 730v2M1086.5 668v64M1087.5 606v126M1088.5 731v1M1089.5 731v1M1090.5 616v117M1091.5 732v1M1092.5 732v1M1093.5 619v114M1094.5 676v58M1095.5 733v1M1096.5 733v1M1097.5 612v122M1098.5 733v1M1099.5 733v2M1100.5 599v136M1101.5 734v1M1102.5 734v1M1103.5 586v150M1104.5 735v1M1105.5 735v1M1106.5 572v164M1107.5 735v2M1108.5 736v1M1109.5 567v170M1110.5 736v1M1111.5 736v2M1112.5 561v177M1113.5 737v1M1114.5 737v1M1115.5 560v178M1116.5 737v2M1117.5 738v1M1118.5 538v201M1119.5 738v1M1120.5 738v1M1121.5 633v107M1122.5 739v1M1123.5 686v54M1124.5 632v108M1125.5 739v2M1126.5 507v234M1127.5 740v1M1128.5 740v1M1129.5 497v245M1130.5 741v1M1131.5 595v147M1132.5 450v292M1133.5 741v2M1134.5 437v306M1135.5 742v1M1136.5 611v132M1137.5 479v264M1138.5 742v2M1139.5 500v244M1140.5 743v1M1141.5 635v109M1142.5 528v217M1143.5 744v1M1144.5 612v133M1145.5 744v1M1146.5 580v166M1147.5 745v1M1148.5 652v94M1149.5 558v188M1150.5 745v3M1151.5 554v194M1152.5 746v2M1153.5 555v194M1154.5 746v3M1155.5 560v189M1156.5 747v1M1157.5 657v92M1158.5 567v182M1159.5 747v7M1160.5 576v173M1161.5 748v2M1162.5 591v159M1163.5 748v10M1164.5 609v141M1165.5 749v1M1166.5 624v127M1167.5 749v2M1168.5 637v120M1169.5 750v6M1170.5 617v135M1171.5 750v2M1172.5 580v172M1173.5 750v3M1174.5 564v189M1175.5 751v2M1176.5 540v213M1177.5 751v40M1178.5 546v207M1179.5 752v2M1180.5 561v193M1181.5 671v83M1182.5 590v165M1183.5 614v140M1184.5 684v71M1185.5 620v135M1186.5 693v62M1187.5 616v140M1188.5 690v66M1189.5 619v137M1190.5 669v88M1191.5 583v174M1192.5 641v116M1193.5 755v3M1194.5 657v101M1195.5 756v1M1196.5 615v143M1197.5 576v183M1198.5 756v2M1199.5 562v197M1200.5 757v2M1201.5 550v209M1202.5 543v218M1203.5 757v3M1204.5 543v217M1205.5 522v238M1206.5 640v121M1207.5 496v264M1208.5 758v2M1209.5 448v313M1210.5 448v313M1211.5 759v3M1212.5 496v265M1213.5 474v288M1214.5 760v2M1215.5 498v264M1216.5 545v217M1217.5 761v2M1218.5 546v217M1219.5 550v213M1220.5 542v221M1221.5 652v112M1222.5 573v192M1223.5 605v159M1224.5 659v105M1225.5 625v139M1226.5 614v153M1227.5 616v149M1228.5 657v108M1229.5 605v160M1230.5 603v162M1231.5 614v162M1232.5 643v124M1233.5 604v162M1234.5 590v177M1235.5 594v174M1236.5 634v133M1237.5 533v235M1238.5 588v181M1239.5 601v167M1240.5 602v166M1241.5 684v84M1242.5 636v133M1243.5 636v132M1244.5 622v147M1245.5 624v145M1246.5 653v118M1247.5 606v163M1248.5 601v168M1249.5 600v170M1250.5 619v151M1251.5 581v189M1252.5 593v179M1253.5 652v120M1254.5 575v196M1255.5 564v208M1256.5 546v227M1257.5 527v245M1258.5 530v242M1259.5 451v321M1260.5 451v328M1261.5 514v259M1262.5 640v133M1263.5 509v264M1264.5 534v240M1265.5 548v232M1266.5 557v221M1267.5 589v186M1268.5 588v186M1269.5 593v181M1270.5 600v174M1271.5 602v173M1272.5 608v169M1273.5 622v153M1274.5 630v145M1275.5 634v142M1276.5 631v145M1277.5 631v145M1278.5 639v142M1279.5 604v172M1280.5 547v230M1281.5 562v216M1282.5 558v219M1283.5 573v205M1284.5 604v174M1285.5 628v150M1286.5 636v147M1287.5 632v147M1288.5 622v158M1289.5 614v166M1290.5 597v183M1291.5 598v181M1292.5 598v182M1293.5 588v192M1294.5 538v243M1295.5 534v246M1296.5 524v257M1297.5 463v319M1298.5 459v322M1299.5 535v246M1300.5 530v251M1301.5 563v218M1302.5 591v193M1303.5 598v184M1304.5 584v199M1305.5 593v190M1306.5 612v172M1307.5 621v162M1308.5 632v151M1309.5 637v147M1310.5 619v166M1311.5 620v166M1312.5 616v169M1313.5 564v221M1314.5 623v162M1315.5 641v147M1316.5 626v164M1317.5 663v122M1318.5 681v106M1319.5 677v109M1320.5 676v111M1321.5 636v153M1322.5 599v188M1323.5 591v201M1324.5 575v214M1325.5 563v225M1326.5 531v256M1327.5 473v318M1328.5 473v315M1329.5 569v220M1330.5 577v211M1331.5 598v191M1332.5 605v185M1333.5 619v170M1334.5 683v107M1335.5 674v119M1336.5 688v102M1337.5 656v135M1338.5 677v113M1339.5 668v123M1340.5 587v206M1341.5 663v128M1342.5 673v121M1343.5 689v102M1344.5 662v129M1345.5 686v106M1346.5 639v153M1347.5 626v171M1348.5 609v185M1349.5 591v202M1350.5 566v228M1351.5 543v251M1352.5 485v309M1353.5 485v309M1354.5 579v216M1355.5 586v208M1356.5 602v192M1357.5 629v166M1358.5 641v154M1359.5 688v109M1360.5 683v112M1361.5 695v101M1362.5 684v112M1363.5 595v201M1364.5 678v119M1365.5 705v93M1366.5 729v68M1367.5 683v115M1368.5 644v154M1369.5 629v169M1370.5 623v175M1371.5 612v186M1372.5 584v216M1373.5 551v247M1374.5 496v302M1375.5 496v304M1376.5 583v216M1377.5 605v194M1378.5 616v185M1379.5 641v159M1380.5 642v158M1381.5 690v112M1382.5 694v106M1383.5 607v194M1384.5 696v104M1385.5 680v121M1386.5 654v147M1387.5 654v148M1388.5 634v170M1389.5 624v178M1390.5 596v208M1391.5 567v235M1392.5 510v293M1393.5 510v294M1394.5 590v213M1395.5 623v181M1396.5 631v173M1397.5 637v167M1398.5 659v146M1399.5 714v91M1400.5 698v111M1401.5 632v281M1402.5 700v106M1403.5 664v141M1404.5 659v147M1405.5 652v155M1406.5 625v182M1407.5 619v188M1408.5 589v218M1409.5 525v282M1410.5 525v282M1411.5 614v193M1412.5 628v180M1413.5 648v161M1414.5 667v143M1415.5 665v144M1416.5 694v115M1417.5 613v195M1418.5 686v123M1419.5 688v121M1420.5 655v154M1421.5 649v161M1422.5 634v175M1423.5 600v212M1424.5 544v267M1425.5 544v266M1426.5 636v175M1427.5 648v163M1428.5 676v135M1429.5 677v135M1430.5 693v119M1431.5 629v184M1432.5 712v101M1433.5 706v107M1434.5 694v120M1435.5 676v137M1436.5 654v163M1437.5 624v189M1438.5 564v249M1439.5 564v250M1440.5 653v161M1441.5 663v151M1442.5 679v136M1443.5 706v108M1444.5 652v168M1445.5 710v105M1446.5 711v106M1447.5 685v130M1448.5 665v151M1449.5 646v170M1450.5 583v234M1451.5 646v172M1452.5 669v148M1453.5 691v138M1454.5 703v114M1455.5 715v102M1456.5 640v177M1457.5 721v97M1458.5 712v108M1459.5 706v112M1460.5 694v124M1461.5 660v158M1462.5 602v218M1463.5 664v157M1464.5 688v131M1465.5 711v109M1466.5 719v101M1467.5 648v187M1468.5 726v96M1469.5 706v115M1470.5 693v132M1471.5 660v161M1472.5 599v228M1473.5 662v161M1474.5 683v139M1475.5 714v107M1476.5 713v109M1477.5 644v180M1478.5 723v101M1479.5 694v131M1480.5 682v145M1481.5 662v161M1482.5 596v230M1483.5 663v162M1484.5 679v152M1485.5 695v132M1486.5 726v99M1487.5 634v190M1488.5 709v120M1489.5 700v125M1490.5 677v148M1491.5 662v164M1492.5 599v227M1493.5 658v175M1494.5 682v147M1495.5 702v126M1496.5 639v187M1497.5 701v125M1498.5 692v135M1499.5 669v159M1500.5 603v224M1501.5 671v157M1502.5 690v142M1503.5 709v119M1504.5 719v112M1505.5 644v189M1506.5 714v116M1507.5 699v131M1508.5 663v168M1509.5 609v226M1510.5 676v154M1511.5 694v138M1512.5 713v117M1513.5 646v188M1514.5 716v115M1515.5 707v127M1516.5 675v156M1517.5 615v216M1518.5 679v156M1519.5 704v132M1520.5 726v106M1521.5 658v175M1522.5 717v118M1523.5 696v137M1524.5 629v204M1525.5 688v145M1526.5 717v118M1527.5 736v98M1528.5 682v159M1529.5 717v118M1530.5 704v144M1531.5 638v202M1532.5 704v131M1533.5 725v110M1534.5 749v88M1535.5 691v146M1536.5 728v119M1537.5 710v126M1538.5 648v191M1539.5 701v138M1540.5 748v89M1541.5 756v81M1542.5 776v61M1543.5 765v74M1544.5 780v58M1545.5 655v183M1546.5 768v71M1547.5 764v77M1548.5 733v107M1549.5 780v61M1550.5 772v68M1551.5 664v183M1552.5 759v83M1553.5 763v82M1554.5 714v126M1555.5 778v62M1556.5 788v54M1557.5 669v172M1558.5 769v73M1559.5 772v69M1560.5 699v148M1561.5 798v46M1562.5 763v92M1563.5 672v198M1564.5 772v73M1565.5 698v205M1566.5 778v68M1567.5 775v76M1568.5 676v195M1569.5 769v79M1570.5 783v63M1571.5 704v161M1572.5 767v97M1573.5 781v79M1574.5 679v170M1575.5 753v108M1576.5 706v168M1577.5 790v58M1578.5 783v90M1579.5 683v169M1580.5 803v45M1581.5 709v141M1582.5 783v88M1583.5 781v69M1584.5 688v165M1585.5 771v85M1586.5 710v149M1587.5 776v82M1588.5 772v84M1589.5 694v164M1590.5 769v84M1591.5 713v138M1592.5 784v68M1593.5 700v214M1594.5 771v82M1595.5 778v101M1596.5 711v145M1597.5 765v119M1598.5 780v83M1599.5 774v82M1600.5 717v158M1601.5 784v101M1602.5 779v96M1603.5 785v77M1604.5 719v149M1605.5 785v73M1606.5 780v78M1607.5 788v74M1608.5 796v78M1609.5 722v169M1610.5 781v86M1611.5 784v106M1612.5 786v77M1613.5 723v168M1614.5 790v90M1615.5 790v89M1616.5 787v79M1617.5 726v137M1618.5 787v81M1619.5 787v105M1620.5 790v78M1621.5 729v140M1622.5 797v72M1623.5 795v101M1624.5 735v142M1625.5 800v71M1626.5 793v93M1627.5 789v100M1628.5 739v130M1629.5 796v76M1630.5 803v68M1631.5 787v84M1632.5 742v138M1633.5 786v89M1634.5 800v72M1635.5 748v132M1636.5 805v67M1637.5 799v75M1638.5 810v64M1639.5 752v122M1640.5 797v109M1641.5 806v70M1642.5 758v119M1643.5 810v66M1644.5 810v84M1645.5 761v123M1646.5 817v62M1647.5 805v72M1648.5 811v68M1649.5 769v117M1650.5 826v56M1651.5 809v75M1652.5 775v107M1653.5 815v86M1654.5 820v61M1655.5 779v103M1656.5 842v60M1657.5 818v120M1658.5 784v102M1659.5 817v66M1660.5 823v59M1661.5 791v120M1662.5 823v64M1663.5 862v20M1664.5 794v95M1665.5 835v73M1666.5 835v51M1667.5 800v90M1668.5 827v56M1669.5 804v97M1670.5 835v48M1671.5 828v61M1672.5 808v81M1673.5 838v48M1674.5 833v53M1675.5 810v89M1676.5 833v83M1677.5 813v91M1678.5 842v50M1679.5 840v59M1680.5 819v75M1681.5 834v73M1682.5 843v48M1683.5 823v66M1684.5 840v48M1685.5 823v66M1686.5 846v44M1687.5 846v45M1688.5 829v58M1689.5 853v52M1690.5 829v62M1691.5 841v50M1692.5 831v64M1693.5 843v59M1694.5 856v35M1695.5 834v70M1696.5 837v72M1697.5 834v60M1698.5 850v66M1699.5 837v74M1700.5 850v45M1701.5 854v41M1702.5 857v42M1703.5 850v45M1704.5 846v44M1705.5 854v41M1706.5 851v67M1707.5 861v55M1708.5 845v133M1709.5 870v38M1710.5 852v39M1711.5 874v16M1712.5 854v61M1713.5 851v47M1714.5 858v37M1715.5 850v58M1716.5 846v51M1717.5 866v31M1718.5 861v34M1719.5 851v63M1720.5 860v34M1721.5 848v66M1722.5 851v56M1723.5 888v25M1724.5 856v39M1725.5 850v54M1726.5 846v51M1727.5 866v50M1728.5 854v40M1729.5 860v37M1730.5 850v48M1731.5 863v51M1732.5 862v30M1733.5 859v50M1734.5 861v33M1735.5 856v40M1736.5 862v63M1737.5 848v51M1738.5 845v65M1739.5 861v38M1740.5 870v116M1741.5 857v41M1742.5 854v64M1743.5 864v30M1744.5 866v55M1745.5 855v43M1746.5 866v29M1747.5 868v48M1748.5 863v36M1749.5 858v46M1750.5 863v48M1751.5 877v21M1752.5 862v73M1753.5 868v69M1754.5 867v30M1755.5 870v24M1756.5 867v41M1757.5 868v28M1758.5 865v33M1759.5 861v36M1760.5 870v24M1761.5 862v44M1762.5 868v29M1763.5 870v27M1764.5 861v70M1765.5 884v25M1766.5 870v43M1767.5 872v24M1768.5 870v27M1769.5 862v65M1770.5 863v77M1771.5 873v25M1772.5 868v27M1773.5 884v13M1774.5 872v41M1775.5 866v77M1776.5 858v44M1777.5 869v27M1778.5 878v20M1779.5 872v33M1780.5 865v35M1781.5 879v51M1782.5 870v75M1783.5 879v24M1784.5 873v49M1785.5 890v88M1786.5 869v31M1787.5 874v57M1788.5 861v36M1789.5 886v14M1790.5 876v22M1791.5 873v24M1792.5 870v30M1793.5 868v28M1794.5 865v59M1795.5 881v16M1796.5 885v18M1797.5 881v40M1798.5 879v20M1799.5 879v24M1800.5 878v49M1801.5 877v20M1802.5 885v46M1803.5 870v32M1804.5 879v23M1805.5 873v28M1806.5 876v41M1807.5 877v46M1808.5 872v26M1809.5 881v44M1810.5 870v51M1811.5 884v35M1812.5 875v23M1813.5 895v5M1814.5 875v25M1815.5 870v32M1816.5 881v17M1817.5 870v35M1818.5 889v64M1819.5 880v31M1820.5 890v16M1821.5 884v18M1822.5 888v44M1823.5 879v42M1824.5 883v41M1825.5 896v6M1826.5 880v40M1827.5 882v43M1828.5 882v42M1829.5 891v12M1830.5 878v36M1831.5 892v35M1832.5 878v25M1833.5 895v10M1834.5 884v42M1835.5 885v29M1836.5 884v21M1837.5 883v22M1838.5 895v51M1839.5 895v26M1840.5 881v30" stroke="#00ff00" stroke-width="1" fill="none"/>
<path d="M74.5 499v1M75.5 499v2M76.5 500v1M77.5 500v1M78.5 500v1M79.5 500v1M80.5 500v2M81.5 501v1M82.5 501v1M83.5 501v1M84.5 501v2M85.5 502v1M86.5 502v1M87.5 502v1M88.5 502v2M89.5 503v1M90.5 503v1M91.5 503v1M92.5 503v1M93.5 503v2M94.5 504v1M95.5 504v1M96.5 504v1M97.5 504v2M98.5 505v1M99.5 505v1M100.5 505v1M101.5 505v1M102.5 505v2M103.5 506v1M104.5 506v1M105.5 506v1M106.5 506v2M107.5 507v1M108.5 507v1M109.5 507v1M110.5 507v2M111.5 508v1M112.5 508v1M113.5 508v1M114.5 508v1M115.5 508v2M116.5 509v1M117.5 509v1M118.5 509v1M119.5 509v2M120.5 510v1M121.5 510v1M122.5 510v1M123.5 510v2M124.5 511v1M125.5 511v1M126.5 511v1M127.5 511v1M128.5 511v2M129.5 512v1M130.5 512v1M131.5 512v1M132.5 512v2M133.5 513v1M134.5 513v1M135.5 513v1M136.5 513v2M137.5 514v1M138.5 514v1M139.5 514v1M140.5 514v1M141.5 514v2M142.5 515v1M143.5 515v1M144.5 515v1M145.5 515v2M146.5 516v1M147.5 516v1M148.5 516v1M149.5 516v1M150.5 516v2M151.5 517v1M152.5 517v1M153.5 517v1M154.5 517v2M155.5 518v1M156.5 518v1M157.5 518v1M158.5 518v2M159.5 519v1M160.5 519v1M161.5 519v1M162.5 519v1M163.5 519v2M164.5 520v1M165.5 520v1M166.5 520v1M167.5 520v2M168.5 521v1M169.5 521v1M170.5 521v1M171.5 521v2M172.5 522v1M173.5 522v1M174.5 522v1M175.5 522v1M176.5 522v2M177.5 523v1M178.5 523v1M179.5 523v1M180.5 523v2M181.5 524v1M182.5 524v1M183.5 524v1M184.5 524v2M185.5 525v1M186.5 525v1M187.5 525v1M188.5 525v1M189.5 525v2M190.5 526v1M191.5 526v1M192.5 526v1M193.5 526v2M194.5 527v1M195.5 527v1M196.5 527v1M197.5 527v1M198.5 527v2M199.5 528v1M200.5 528v1M201.5 528v1M202.5 528v2M203.5 529v1M204.5 529v1M205.5 529v1M206.5 529v2M207.5 530v1M208.5 530v1M209.5 530v1M210.5 530v1M211.5 530v2M212.5 531v1M213.5 531v1M214.5 531v1M215.5 531v2M216.5 532v1M217.5 532v1M218.5 532v1M219.5 532v2M220.5 533v1M221.5 533v1M222.5 533v1M223.5 533v1M224.5 533v2M225.5 534v1M226.5 534v1M227.5 534v1M228.5 534v2M229.5 535v1M230.5 535v1M231.5 535v1M232.5 535v2M233.5 536v1M234.5 536v1M235.5 536v1M236.5 536v1M237.5 536v2M238.5 537v1M239.5 537v1M240.5 537v1M241.5 537v2M242.5 538v1M243.5 538v1M244.5 538v1M245.5 538v1M246.5 538v2M247.5 539v1M248.5 539v1M249.5 539v1M250.5 539v2M251.5 540v1M252.5 540v1M253.5 540v1M254.5 540v2M255.5 541v1M256.5 541v1M257.5 541v1M258.5 541v1M259.5 541v2M260.5 542v1M261.5 542v1M262.5 542v1M263.5 542v2M264.5 543v1M265.5 543v1M266.5 543v1M267.5 543v2M268.5 544v1M269.5 544v1M270.5 544v1M271.5 544v1M272.5 544v2M273.5 545v1M274.5 545v1M275.5 545v1M276.5 545v2M277.5 546v1M278.5 546v1M279.5 546v1M280.5 546v2M281.5 547v1M282.5 547v1M283.5 547v1M284.5 547v1M285.5 547v2M286.5 548v1M287.5 548v1M288.5 548v1M289.5 548v2M290.5 549v1M291.5 549v1M292.5 549v1M293.5 549v1M294.5 549v2M295.5 550v1M296.5 550v1M297.5 550v1M298.5 550v2M299.5 551v1M300.5 551v1M301.5 551v1M302.5 551v2M303.5 552v1M304.5 552v1M305.5 552v1M306.5 552v1M307.5 552v2M308.5 553v1M309.5 553v1M310.5 553v1M311.5 553v2M312.5 554v1M313.5 554v1M314.5 554v1M315.5 554v2M316.5 555v1M317.5 555v1M318.5 555v1M319.5 555v1M320.5 555v2M321.5 556v1M322.5 556v1M323.5 556v1M324.5 556v2M325.5 557v1M326.5 557v1M327.5 557v1M328.5 557v2M329.5 558v1M330.5 558v1M331.5 558v1M332.5 558v1M333.5 558v2M334.5 559v1M335.5 559v1M336.5 559v1M337.5 559v2M338.5 560v1M339.5 560v1M340.5 560v1M341.5 560v1M342.5 560v2M343.5 561v1M344.5 561v1M345.5 561v1M346.5 561v2M347.5 562v1M348.5 562v1M349.5 562v1M350.5 562v2M351.5 563v1M352.5 563v1M353.5 563v1M354.5 563v1M355.5 563v2M356.5 564v1M357.5 564v1M358.5 564v1M359.5 564v2M360.5 565v1M361.5 565v1M362.5 565v1M363.5 565v2M364.5 566v1M365.5 566v1M366.5 566v1M367.5 566v1M368.5 566v2M369.5 567v1M370.5 567v1M371.5 567v1M372.5 567v2M373.5 568v1M374.5 568v1M375.5 568v1M376.5 568v2M377.5 569v1M378.5 569v1M379.5 569v1M380.5 569v1M381.5 569v2M382.5 570v1M383.5 570v1M384.5 570v1M385.5 570v2M386.5 571v1M387.5 571v1M388.5 571v1M389.5 571v1M390.5 571v2M391.5 572v1M392.5 572v1M393.5 572v1M394.5 572v2M395.5 573v1M396.5 573v1M397.5 573v1M398.5 573v2M399.5 574v1M400.5 574v1M401.5 574v1M402.5 574v1M403.5 574v2M404.5 575v1M405.5 575v1M406.5 575v1M407.5 575v2M408.5 576v1M409.5 576v1M410.5 576v1M411.5 576v2M412.5 577v1M413.5 577v1M414.5 577v1M415.5 577v1M416.5 577v2M417.5 578v1M418.5 578v1M419.5 578v1M420.5 578v2M421.5 579v1M422.5 579v1M423.5 579v1M424.5 579v2M425.5 580v1M426.5 580v1M427.5 580v1M428.5 580v1M429.5 580v2M430.5 581v1M431.5 581v1M432.5 581v1M433.5 581v2M434.5 582v1M435.5 582v1M436.5 582v1M437.5 582v1M438.5 582v2M439.5 583v1M440.5 583v1M441.5 583v1M442.5 583v2M443.5 584v1M444.5 584v1M445.5 584v1M446.5 584v2M447.5 585v1M448.5 585v1M449.5 585v1M450.5 585v1M451.5 585v2M452.5 586v1M453.5 586v1M454.5 586v1M455.5 586v2M456.5 587v1M457.5 587v1M458.5 587v1M459.5 587v2M460.5 588v1M461.5 588v1M462.5 588v1M463.5 588v1M464.5 588v2M465.5 589v1M466.5 589v1M467.5 589v1M468.5 589v2M469.5 590v1M470.5 590v1M471.5 590v1M472.5 590v2M473.5 591v1M474.5 591v1M475.5 591v1M476.5 591v1M477.5 591v2M478.5 592v1M479.5 592v1M480.5 592v1M481.5 592v2M482.5 593v1M483.5 593v1M484.5 593v1M485.5 593v1M486.5 593v2M487.5 594v1M488.5 594v1M489.5 594v1M490.5 594v2M491.5 595v1M492.5 595v1M493.5 595v1M494.5 595v2M495.5 596v1M496.5 596v1M497.5 596v1M498.5 596v1M499.5 596v2M500.5 597v1M501.5 597v1M502.5 597v1M503.5 597v2M504.5 598v1M505.5 598v1M506.5 598v1M507.5 598v2M508.5 599v1M509.5 599v1M510.5 599v1M511.5 599v1M512.5 599v2M513.5 600v1M514.5 600v1M515.5 599v2M516.5 592v8M517.5 585v8M518.5 578v8M519.5 571v8M520.5 564v8M521.5 557v8M522.5 550v8M523.5 547v5M524.5 551v9M525.5 559v9M526.5 567v8M527.5 574v9M528.5 582v9M529.5 590v9M530.5 598v7M531.5 604v1M532.5 604v1M533.5 604v1M534.5 604v2M535.5 605v1M536.5 605v1M537.5 605v1M538.5 605v2M539.5 606v1M540.5 606v1M541.5 606v1M542.5 606v2M543.5 607v1M544.5 607v1M545.5 607v1M546.5 607v1M547.5 607v2M548.5 608v1M549.5 608v1M550.5 608v1M551.5 608v2M552.5 609v1M553.5 609v1M554.5 609v1M555.5 609v2M556.5 610v1M557.5 610v1M558.5 610v1M559.5 610v1M560.5 610v2M561.5 611v1M562.5 611v1M563.5 611v1M564.5 611v2M565.5 612v1M566.5 612v1M567.5 612v1M568.5 612v2M569.5 613v1M570.5 613v1M571.5 613v1M572.5 613v1M573.5 613v2M574.5 614v1M575.5 614v1M576.5 614v1M577.5 614v2M578.5 615v1M579.5 615v1M580.5 615v1M581.5 615v1M582.5 615v2M583.5 616v1M584.5 616v1M585.5 616v1M586.5 616v2M587.5 617v1M588.5 617v1M589.5 617v1M590.5 617v2M591.5 618v1M592.5 618v1M593.5 618v1M594.5 618v1M595.5 618v2M596.5 619v1M597.5 619v1M598.5 619v1M599.5 619v2M600.5 620v1M601.5 620v1M602.5 620v1M603.5 620v2M604.5 621v1M605.5 621v1M606.5 621v1M607.5 621v1M608.5 621v2M609.5 622v1M610.5 622v1M611.5 622v1M612.5 622v2M613.5 623v1M614.5 623v1M615.5 623v1M616.5 623v2M617.5 624v1M618.5 624v1M619.5 624v1M620.5 624v1M621.5 624v2M622.5 625v1M623.5 624v2M624.5 622v3M625.5 620v3M626.5 618v3M627.5 617v3M628.5 619v3M629.5 621v4M630.5 624v4M631.5 627v1M632.5 627v1M633.5 627v1M634.5 627v2M635.5 628v1M636.5 628v1M637.5 628v1M638.5 628v2M639.5 629v1M640.5 629v1M641.5 629v1M642.5 629v1M643.5 629v2M644.5 630v1M645.5 630v1M646.5 630v1M647.5 630v2M648.5 631v1M649.5 631v1M650.5 631v1M651.5 631v2M652.5 632v1M653.5 632v1M654.5 632v1M655.5 632v1M656.5 632v2M657.5 633v1M658.5 633v1M659.5 633v1M660.5 633v2M661.5 634v1M662.5 634v1M663.5 634v1M664.5 634v2M665.5 635v1M666.5 635v1M667.5 635v1M668.5 635v1M669.5 635v2M670.5 636v1M671.5 636v1M672.5 636v1M673.5 636v2M674.5 637v1M675.5 637v1M676.5 637v1M677.5 637v1M678.5 637v2M679.5 638v1M680.5 638v1M681.5 638v1M682.5 638v2M683.5 639v1M684.5 639v1M685.5 639v6M686.5 644v12M687.5 655v12M688.5 656v12M689.5 643v14M690.5 636v8M691.5 637v3M692.5 639v3M693.5 641v1M694.5 641v1M695.5 641v2M696.5 642v1M697.5 642v1M698.5 642v1M699.5 642v2M700.5 643v1M701.5 643v1M702.5 643v1M703.5 643v1M704.5 643v2M705.5 644v1M706.5 644v1M707.5 644v1M708.5 644v2M709.5 645v1M710.5 645v1M711.5 645v1M712.5 645v2M713.5 646v1M714.5 646v1M715.5 646v1M716.5 646v1M717.5 646v2M718.5 647v1M719.5 647v1M720.5 647v1M721.5 647v2M722.5 648v1M723.5 648v1M724.5 648v1M725.5 648v1M726.5 648v2M727.5 649v1M728.5 649v1M729.5 644v6M730.5 636v9M731.5 635v7M732.5 641v9M733.5 649v2M734.5 650v2M735.5 651v1M736.5 651v1M737.5 651v1M738.5 651v1M739.5 651v2M740.5 652v1M741.5 652v1M742.5 652v1M743.5 652v2M744.5 653v1M745.5 653v1M746.5 653v1M747.5 653v2M748.5 654v1M749.5 654v1M750.5 654v1M751.5 654v1M752.5 654v2M753.5 655v1M754.5 655v1M755.5 655v1M756.5 655v2M757.5 656v1M758.5 656v1M759.5 656v1M760.5 656v2M761.5 657v1M762.5 657v1M763.5 657v10M764.5 666v8M765.5 659v12M766.5 658v2M767.5 658v1M768.5 658v1M769.5 658v2M770.5 659v1M771.5 659v1M772.5 659v1M773.5 659v1M774.5 659v2M775.5 660v1M776.5 660v1M777.5 660v1M778.5 660v2M779.5 661v1M780.5 661v1M781.5 661v1M782.5 661v2M783.5 662v1M784.5 662v1M785.5 662v1M786.5 662v1M787.5 662v2M788.5 663v1M789.5 663v1M790.5 661v3M791.5 652v10M792.5 652v11M793.5 662v3M794.5 664v1M795.5 664v2M796.5 665v1M797.5 665v1M798.5 665v1M799.5 665v1M800.5 665v2M801.5 666v1M802.5 666v1M803.5 666v1M804.5 666v2M805.5 667v1M806.5 667v1M807.5 667v1M808.5 667v2M809.5 668v1M810.5 668v1M811.5 668v1M812.5 668v1M813.5 668v2M814.5 669v6M815.5 670v5M816.5 669v2M817.5 669v2M818.5 670v1M819.5 670v1M820.5 670v1M821.5 670v1M822.5 670v2M823.5 671v1M824.5 671v1M825.5 671v1M826.5 671v2M827.5 672v1M828.5 672v1M829.5 672v1M830.5 672v2M831.5 673v1M832.5 673v1M833.5 673v1M834.5 652v22M835.5 649v24M836.5 672v3M837.5 674v1M838.5 674v1M839.5 674v2M840.5 675v1M841.5 675v1M842.5 675v1M843.5 675v2M844.5 676v1M845.5 676v1M846.5 676v1M847.5 676v2M848.5 677v1M849.5 677v1M850.5 677v1M851.5 653v25M852.5 629v25M853.5 653v26M854.5 678v1M855.5 678v1M856.5 678v2M857.5 679v1M858.5 679v1M859.5 679v1M860.5 679v1M861.5 679v2M862.5 680v1M863.5 680v1M864.5 680v1M865.5 680v2M866.5 681v1M867.5 644v38M868.5 607v38M869.5 644v38M870.5 681v2M871.5 682v1M872.5 682v1M873.5 682v1M874.5 682v2M875.5 683v1M876.5 683v1M877.5 683v1M878.5 683v1M879.5 683v2M880.5 684v1M881.5 684v1M882.5 590v95M883.5 637v49M884.5 685v1M885.5 685v1M886.5 685v1M887.5 685v2M888.5 686v1M889.5 686v1M890.5 686v1M891.5 686v2M892.5 687v1M893.5 687v1M894.5 687v1M895.5 573v115M896.5 630v59M897.5 688v1M898.5 688v1M899.5 688v1M900.5 688v2M901.5 689v1M902.5 689v1M903.5 689v1M904.5 689v1M905.5 689v2M906.5 690v1M907.5 558v133M908.5 624v67M909.5 690v2M910.5 691v1M911.5 691v1M912.5 691v1M913.5 691v2M914.5 692v1M915.5 692v1M916.5 692v1M917.5 692v1M918.5 544v150M919.5 619v75M920.5 693v1M921.5 693v1M922.5 693v2M923.5 694v1M924.5 694v1M925.5 694v1M926.5 694v2M927.5 695v1M928.5 613v83M929.5 531v165M930.5 695v2M931.5 696v1M932.5 696v1M933.5 696v1M934.5 696v1M935.5 696v2M936.5 697v1M937.5 697v1M938.5 608v90M939.5 518v181M940.5 698v1M941.5 698v1M942.5 698v1M943.5 698v1M944.5 698v2M945.5 699v1M946.5 699v1M947.5 603v97M948.5 507v194M949.5 700v1M950.5 700v1M951.5 700v1M952.5 700v1M953.5 700v2M954.5 701v1M955.5 701v1M956.5 458v244M957.5 580v123M958.5 702v1M959.5 702v1M960.5 702v1M961.5 702v2M962.5 703v1M963.5 703v1M964.5 157v547M965.5 703v2M966.5 704v1M967.5 704v1M968.5 704v1M969.5 704v1M970.5 704v2M971.5 705v1M972.5 157v549M973.5 705v1M974.5 705v2M975.5 706v1M976.5 706v1M977.5 706v1M978.5 706v1M979.5 455v253M980.5 581v127M981.5 707v1M982.5 707v1M983.5 707v2M984.5 708v1M985.5 708v1M986.5 499v210M987.5 603v106M988.5 708v2M989.5 709v1M990.5 709v1M991.5 709v1M992.5 709v2M993.5 506v205M994.5 710v1M995.5 710v1M996.5 710v2M997.5 711v1M998.5 711v1M999.5 516v196M1000.5 613v99M1001.5 711v2M1002.5 712v1M1003.5 712v1M1004.5 712v1M1005.5 526v188M1006.5 619v95M1007.5 713v1M1008.5 713v1M1009.5 713v2M1010.5 714v1M1011.5 535v180M1012.5 625v90M1013.5 714v1M1014.5 714v2M1015.5 715v1M1016.5 715v1M1017.5 546v170M1018.5 715v2M1019.5 716v1M1020.5 716v1M1021.5 716v1M1022.5 559v158M1023.5 638v80M1024.5 717v1M1025.5 717v1M1026.5 717v2M1027.5 644v75M1028.5 571v148M1029.5 718v1M1030.5 718v1M1031.5 718v2M1032.5 653v67M1033.5 587v133M1034.5 719v1M1035.5 719v2M1036.5 720v1M1037.5 662v59M1038.5 605v116M1039.5 720v1M1040.5 720v2M1041.5 721v1M1042.5 629v93M1043.5 675v47M1044.5 721v2M1045.5 722v1M1046.5 722v1M1047.5 646v77M1048.5 722v2M1049.5 723v1M1050.5 723v1M1051.5 628v96M1052.5 676v48M1053.5 723v2M1054.5 724v1M1055.5 724v1M1056.5 616v109M1057.5 724v2M1058.5 725v1M1059.5 725v1M1060.5 597v129M1061.5 725v2M1062.5 726v1M1063.5 726v1M1064.5 691v36M1065.5 726v1M1066.5 726v2M1067.5 727v1M1068.5 473v255M1069.5 727v1M1070.5 727v2M1071.5 728v1M1072.5 447v282M1073.5 728v1M1074.5 728v1M1075.5 728v2M1076.5 471v259M1077.5 729v1M1078.5 729v1M1079.5 668v63M1080.5 607v124M1081.5 730v1M1082.5 730v1M1083.5 593v139M1084.5 731v1M1085.5 731v1M1086.5 668v64M1087.5 606v126M1088.5 731v2M1089.5 732v1M1090.5 616v117M1091.5 732v1M1092.5 732v2M1093.5 623v111M1094.5 678v56M1095.5 733v1M1096.5 733v1M1097.5 612v123M1098.5 734v1M1099.5 734v1M1100.5 599v136M1101.5 734v2M1102.5 735v1M1103.5 586v150M1104.5 735v1M1105.5 735v2M1106.5 576v161M1107.5 736v1M1108.5 736v1M1109.5 567v171M1110.5 737v1M1111.5 737v1M1112.5 564v174M1113.5 737v1M1114.5 737v2M1115.5 564v175M1116.5 738v1M1117.5 738v1M1118.5 575v165M1119.5 739v1M1120.5 739v1M1121.5 633v107M1122.5 739v2M1123.5 686v55M1124.5 632v109M1125.5 740v1M1126.5 511v230M1127.5 740v2M1128.5 741v1M1129.5 497v245M1130.5 741v1M1131.5 598v145M1132.5 453v290M1133.5 742v1M1134.5 437v306M1135.5 742v2M1136.5 613v131M1137.5 483v261M1138.5 743v1M1139.5 504v240M1140.5 743v2M1141.5 638v107M1142.5 532v213M1143.5 744v1M1144.5 612v134M1145.5 745v1M1146.5 580v166M1147.5 745v1M1148.5 654v92M1149.5 562v185M1150.5 746v2M1151.5 558v190M1152.5 746v3M1153.5 559v189M1154.5 747v2M1155.5 564v186M1156.5 747v2M1157.5 659v90M1158.5 571v178M1159.5 748v2M1160.5 580v170M1161.5 748v2M1162.5 591v159M1163.5 749v10M1164.5 609v141M1165.5 749v1M1166.5 628v123M1167.5 750v2M1168.5 641v111M1169.5 750v1M1170.5 617v136M1171.5 751v1M1172.5 584v168M1173.5 751v5M1174.5 564v189M1175.5 751v2M1176.5 544v210M1177.5 752v2M1178.5 550v204M1179.5 752v2M1180.5 565v189M1181.5 671v84M1182.5 590v166M1183.5 618v137M1184.5 685v70M1185.5 624v132M1186.5 693v63M1187.5 620v136M1188.5 690v66M1189.5 619v137M1190.5 687v70M1191.5 620v137M1192.5 641v116M1193.5 756v3M1194.5 657v101M1195.5 756v1M1196.5 619v139M1197.5 580v179M1198.5 757v1M1199.5 562v197M1200.5 757v2M1201.5 554v205M1202.5 543v220M1203.5 758v2M1204.5 547v213M1205.5 526v234M1206.5 642v120M1207.5 496v264M1208.5 759v1M1209.5 452v310M1210.5 452v310M1211.5 760v3M1212.5 496v265M1213.5 502v260M1214.5 760v2M1215.5 532v230M1216.5 549v214M1217.5 761v2M1218.5 550v213M1219.5 554v209M1220.5 569v194M1221.5 666v98M1222.5 577v193M1223.5 609v155M1224.5 659v105M1225.5 625v140M1226.5 618v146M1227.5 620v171M1228.5 657v109M1229.5 605v160M1230.5 616v149M1231.5 618v161M1232.5 643v124M1233.5 604v163M1234.5 594v173M1235.5 594v175M1236.5 634v133M1237.5 533v235M1238.5 592v226M1239.5 601v168M1240.5 606v162M1241.5 686v83M1242.5 640v130M1243.5 640v129M1244.5 622v149M1245.5 624v145M1246.5 653v118M1247.5 610v160M1248.5 605v165M1249.5 604v167M1250.5 623v147M1251.5 585v185M1252.5 593v180M1253.5 652v119M1254.5 578v193M1255.5 568v204M1256.5 550v223M1257.5 531v241M1258.5 534v238M1259.5 455v317M1260.5 455v320M1261.5 535v238M1262.5 647v127M1263.5 522v251M1264.5 538v236M1265.5 552v229M1266.5 561v218M1267.5 589v186M1268.5 588v186M1269.5 597v177M1270.5 604v170M1271.5 606v169M1272.5 608v169M1273.5 622v153M1274.5 630v145M1275.5 634v142M1276.5 635v141M1277.5 631v145M1278.5 643v135M1279.5 608v168M1280.5 547v249M1281.5 566v212M1282.5 562v216M1283.5 577v202M1284.5 608v171M1285.5 628v150M1286.5 636v143M1287.5 636v143M1288.5 625v155M1289.5 615v166M1290.5 600v180M1291.5 602v178M1292.5 602v181M1293.5 592v189M1294.5 542v241M1295.5 534v246M1296.5 524v257M1297.5 463v319M1298.5 463v318M1299.5 539v242M1300.5 534v247M1301.5 563v219M1302.5 591v194M1303.5 602v180M1304.5 607v176M1305.5 597v187M1306.5 616v169M1307.5 621v163M1308.5 636v147M1309.5 641v145M1310.5 623v163M1311.5 624v162M1312.5 620v166M1313.5 568v217M1314.5 623v162M1315.5 645v140M1316.5 630v156M1317.5 661v124M1318.5 681v106M1319.5 676v111M1320.5 676v112M1321.5 615v174M1322.5 611v176M1323.5 587v204M1324.5 577v212M1325.5 559v229M1326.5 536v252M1327.5 472v319M1328.5 472v316M1329.5 556v233M1330.5 587v201M1331.5 586v205M1332.5 607v183M1333.5 622v168M1334.5 681v109M1335.5 677v120M1336.5 686v105M1337.5 656v135M1338.5 673v118M1339.5 672v120M1340.5 586v208M1341.5 662v129M1342.5 669v124M1343.5 687v104M1344.5 662v130M1345.5 684v109M1346.5 631v161M1347.5 627v167M1348.5 609v186M1349.5 593v201M1350.5 566v228M1351.5 549v245M1352.5 484v310M1353.5 484v310M1354.5 570v227M1355.5 590v204M1356.5 612v183M1357.5 618v177M1358.5 632v164M1359.5 684v113M1360.5 679v116M1361.5 701v97M1362.5 686v112M1363.5 594v202M1364.5 671v126M1365.5 720v80M1366.5 729v70M1367.5 682v117M1368.5 635v163M1369.5 642v156M1370.5 616v183M1371.5 592v206M1372.5 577v228M1373.5 549v250M1374.5 495v304M1375.5 495v306M1376.5 579v220M1377.5 597v202M1378.5 606v195M1379.5 638v163M1380.5 649v151M1381.5 686v116M1382.5 689v113M1383.5 606v196M1384.5 686v137M1385.5 676v126M1386.5 651v150M1387.5 651v151M1388.5 639v162M1389.5 611v191M1390.5 595v209M1391.5 573v229M1392.5 509v295M1393.5 509v296M1394.5 593v210M1395.5 620v184M1396.5 639v167M1397.5 640v165M1398.5 666v141M1399.5 712v93M1400.5 697v114M1401.5 631v176M1402.5 707v100M1403.5 678v127M1404.5 658v183M1405.5 642v165M1406.5 634v174M1407.5 611v197M1408.5 589v218M1409.5 524v283M1410.5 524v284M1411.5 619v188M1412.5 626v183M1413.5 644v166M1414.5 659v151M1415.5 670v141M1416.5 693v116M1417.5 612v196M1418.5 695v115M1419.5 675v134M1420.5 665v144M1421.5 647v163M1422.5 632v177M1423.5 609v203M1424.5 543v269M1425.5 543v267M1426.5 628v184M1427.5 654v157M1428.5 664v147M1429.5 670v142M1430.5 691v121M1431.5 628v188M1432.5 708v105M1433.5 699v114M1434.5 679v133M1435.5 663v152M1436.5 643v171M1437.5 631v182M1438.5 563v251M1439.5 563v253M1440.5 660v157M1441.5 660v154M1442.5 682v133M1443.5 718v96M1444.5 651v166M1445.5 715v100M1446.5 712v105M1447.5 687v129M1448.5 677v139M1449.5 645v173M1450.5 582v235M1451.5 643v176M1452.5 670v147M1453.5 682v150M1454.5 710v107M1455.5 719v98M1456.5 639v178M1457.5 721v98M1458.5 709v111M1459.5 708v112M1460.5 676v144M1461.5 671v147M1462.5 601v221M1463.5 654v167M1464.5 687v132M1465.5 704v118M1466.5 719v102M1467.5 647v184M1468.5 714v109M1469.5 699v123M1470.5 684v185M1471.5 659v166M1472.5 598v226M1473.5 668v156M1474.5 684v141M1475.5 706v116M1476.5 716v106M1477.5 643v181M1478.5 720v103M1479.5 694v131M1480.5 678v145M1481.5 656v168M1482.5 595v233M1483.5 653v179M1484.5 682v149M1485.5 700v127M1486.5 712v113M1487.5 633v193M1488.5 697v133M1489.5 705v120M1490.5 692v133M1491.5 663v165M1492.5 598v229M1493.5 657v187M1494.5 679v150M1495.5 708v120M1496.5 638v189M1497.5 716v110M1498.5 689v139M1499.5 657v172M1500.5 602v226M1501.5 664v164M1502.5 706v128M1503.5 704v126M1504.5 717v116M1505.5 643v186M1506.5 713v122M1507.5 698v136M1508.5 672v162M1509.5 608v228M1510.5 665v166M1511.5 701v140M1512.5 716v114M1513.5 645v193M1514.5 720v112M1515.5 707v130M1516.5 681v150M1517.5 614v219M1518.5 683v156M1519.5 701v135M1520.5 731v103M1521.5 657v176M1522.5 713v122M1523.5 693v143M1524.5 628v206M1525.5 676v157M1526.5 703v133M1527.5 735v99M1528.5 681v162M1529.5 726v110M1530.5 695v155M1531.5 637v204M1532.5 695v140M1533.5 736v99M1534.5 741v97M1535.5 690v148M1536.5 740v114M1537.5 716v121M1538.5 647v192M1539.5 718v126M1540.5 730v107M1541.5 694v143M1542.5 770v67M1543.5 755v86M1544.5 732v106M1545.5 658v182M1546.5 720v121M1547.5 762v81M1548.5 704v139M1549.5 753v90M1550.5 733v136M1551.5 667v191M1552.5 735v107M1553.5 756v92M1554.5 715v128M1555.5 770v72M1556.5 743v104M1557.5 672v170M1558.5 742v100M1559.5 772v71M1560.5 720v153M1561.5 767v102M1562.5 753v112M1563.5 675v174M1564.5 741v103M1565.5 721v130M1566.5 776v96M1567.5 745v99M1568.5 679v177M1569.5 753v104M1570.5 780v64M1571.5 722v123M1572.5 766v89M1573.5 752v98M1574.5 682v165M1575.5 752v95M1576.5 729v121M1577.5 788v75M1578.5 766v100M1579.5 686v185M1580.5 762v100M1581.5 728v139M1582.5 782v68M1583.5 776v77M1584.5 691v161M1585.5 761v106M1586.5 734v134M1587.5 778v95M1588.5 768v85M1589.5 697v154M1590.5 767v86M1591.5 748v114M1592.5 778v100M1593.5 703v150M1594.5 771v82M1595.5 781v85M1596.5 775v79M1597.5 767v99M1598.5 722v151M1599.5 772v85M1600.5 782v76M1601.5 780v80M1602.5 730v151M1603.5 784v81M1604.5 783v76M1605.5 788v82M1606.5 728v160M1607.5 791v84M1608.5 792v69M1609.5 778v89M1610.5 783v83M1611.5 731v143M1612.5 785v89M1613.5 790v76M1614.5 792v90M1615.5 736v127M1616.5 790v73M1617.5 788v77M1618.5 787v102M1619.5 742v127M1620.5 792v117M1621.5 791v75M1622.5 793v75M1623.5 747v147M1624.5 791v98M1625.5 802v67M1626.5 747v125M1627.5 789v108M1628.5 798v88M1629.5 796v79M1630.5 754v116M1631.5 787v87M1632.5 789v87M1633.5 757v114M1634.5 800v74M1635.5 800v76M1636.5 803v70M1637.5 763v112M1638.5 813v90M1639.5 802v90M1640.5 766v111M1641.5 809v74M1642.5 806v68M1643.5 806v87M1644.5 772v113M1645.5 811v97M1646.5 817v87M1647.5 778v103M1648.5 814v63M1649.5 817v78M1650.5 786v93M1651.5 805v72M1652.5 815v78M1653.5 792v104M1654.5 822v77M1655.5 822v60M1656.5 798v82M1657.5 821v85M1658.5 824v57M1659.5 803v85M1660.5 819v65M1661.5 819v69M1662.5 806v96M1663.5 860v23M1664.5 827v71M1665.5 812v76M1666.5 835v53M1667.5 822v64M1668.5 818v126M1669.5 828v96M1670.5 831v82M1671.5 824v88M1672.5 826v58M1673.5 826v60M1674.5 836v53M1675.5 851v88M1676.5 826v66M1677.5 834v66M1678.5 840v50M1679.5 831v54M1680.5 839v68M1681.5 837v77M1682.5 841v81M1683.5 851v75M1684.5 838v72M1685.5 838v75M1686.5 842v48M1687.5 848v44M1688.5 838v52M1689.5 843v49M1690.5 841v51M1691.5 806v95M1692.5 840v53M1693.5 806v84M1694.5 850v47M1695.5 870v19M1696.5 820v105M1697.5 845v57M1698.5 824v72M1699.5 851v39M1700.5 849v99M1701.5 853v51M1702.5 828v61M1703.5 852v45M1704.5 846v45M1705.5 826v72M1706.5 847v44M1707.5 857v39M1708.5 848v46M1709.5 866v25M1710.5 818v73M1711.5 876v18M1712.5 814v77M1713.5 847v48M1714.5 813v80M1715.5 853v43M1716.5 815v82M1717.5 862v32M1718.5 822v82M1719.5 856v35M1720.5 867v28M1721.5 850v43M1722.5 853v38M1723.5 887v9M1724.5 854v45M1725.5 856v37M1726.5 853v44M1727.5 755v138M1728.5 862v32M1729.5 755v137M1730.5 857v37M1731.5 870v29M1732.5 861v31M1733.5 857v67M1734.5 861v32M1735.5 855v39M1736.5 860v36M1737.5 830v63M1738.5 852v47M1739.5 826v81M1740.5 868v29M1741.5 825v75M1742.5 857v41M1743.5 827v74M1744.5 865v29M1745.5 832v105M1746.5 862v32M1747.5 838v78M1748.5 866v32M1749.5 861v33M1750.5 872v38M1751.5 877v40M1752.5 871v26M1753.5 870v25M1754.5 870v58M1755.5 869v33M1756.5 870v29M1757.5 866v28M1758.5 810v114M1759.5 809v86M1760.5 872v30M1761.5 865v33M1762.5 870v29M1763.5 868v56M1764.5 870v27M1765.5 883v16M1766.5 866v32M1767.5 874v29M1768.5 878v17M1769.5 865v67M1770.5 867v49M1771.5 873v27M1772.5 866v82M1773.5 880v34M1774.5 875v23M1775.5 866v56M1776.5 866v33M1777.5 872v74M1778.5 885v15M1779.5 880v18M1780.5 873v23M1781.5 878v70M1782.5 872v53M1783.5 849v51M1784.5 869v38M1785.5 889v11M1786.5 871v32M1787.5 876v23M1788.5 866v32M1789.5 882v14M1790.5 875v30M1791.5 872v27M1792.5 869v33M1793.5 873v51M1794.5 865v37M1795.5 881v19M1796.5 848v50M1797.5 887v11M1798.5 879v20M1799.5 879v22M1800.5 878v28M1801.5 879v20M1802.5 883v15M1803.5 877v48M1804.5 881v21M1805.5 880v47M1806.5 879v22M1807.5 879v18M1808.5 879v19M1809.5 879v19M1810.5 877v24M1811.5 882v18M1812.5 877v22M1813.5 895v4M1814.5 877v33M1815.5 844v57M1816.5 879v20M1817.5 878v50M1818.5 892v8M1819.5 884v37M1820.5 888v11M1821.5 886v40M1822.5 892v35M1823.5 878v50M1824.5 882v20M1825.5 894v49M1826.5 883v22M1827.5 860v43M1828.5 890v34M1829.5 891v33M1830.5 881v66M1831.5 891v25M1832.5 885v17M1833.5 817v85M1834.5 886v16M1835.5 881v24M1836.5 887v16M1837.5 885v18M1838.5 895v78M1839.5 893v68M1840.5 885v25" stroke="#ff4e00" stroke-width="1" fill="none"/>
<path d="M74 153.5H1841M74 1023.5H1841M74.5 153V1024M1840.5 153V1024M67 153.5H74M67 232.5H74M67 311.5H74M67 390.5H74M67 469.5H74M67 548.5H74M67 628.5H74M67 707.5H74M67 786.5H74M67 865.5H74M67 944.5H74M67 1023.5H74M74.5 1024V1027M101.5 1024V1027M124.5 1024V1027M144.5 1024V1027M162.5 1024V1027M178.5 1024V1031M282.5 1024V1027M343.5 1024V1027M386.5 1024V1027M419.5 1024V1027M446.5 1024V1027M470.5 1024V1027M490.5 1024V1027M507.5 1024V1027M523.5 1024V1031M627.5 1024V1027M688.5 1024V1027M731.5 1024V1027M764.5 1024V1027M792.5 1024V1027M815.5 1024V1027M835.5 1024V1027M852.5 1024V1027M868.5 1024V1031M972.5 1024V1027M1033.5 1024V1027M1076.5 1024V1027M1109.5 1024V1027M1137.5 1024V1027M1160.5 1024V1027M1180.5 1024V1027M1197.5 1024V1027M1213.5 1024V1031M1317.5 1024V1027M1378.5 1024V1027M1421.5 1024V1027M1454.5 1024V1027M1482.5 1024V1027M1505.5 1024V1027M1525.5 1024V1027M1542.5 1024V1027M1558.5 1024V1031M1662.5 1024V1027M1723.5 1024V1027M1766.5 1024V1027M1799.5 1024V1027M1827.5 1024V1027" stroke="#c4c4c4" stroke-width="1" fill="none"/>
</svg>
<div class="yl" style="top:145px">20dB</div>
<div class="yl" style="top:224px">0dB</div>
<div class="yl" style="top:303px">-20dB</div>
<div class="yl" style="top:382px">-40dB</div>
<div class="yl" style="top:461px">-60dB</div>
<div class="yl" style="top:540px">-80dB</div>
<div class="yl" style="top:620px">-100dB</div>
<div class="yl" style="top:699px">-120dB</div>
<div class="yl" style="top:778px">-140dB</div>
<div class="yl" style="top:857px">-160dB</div>
<div class="yl" style="top:936px">-180dB</div>
<div class="yl" style="top:1015px">-200dB</div>
<div class="xl" style="left:138px">100Hz</div>
<div class="xl" style="left:483px">1KHz</div>
<div class="xl" style="left:828px">10KHz</div>
<div class="xl" style="left:1173px">100KHz</div>
<div class="xl" style="left:1518px">1MHz</div>
<div class="tl" style="left:487px;color:#00ff00">V(shush)</div>
<div class="tl" style="left:1371px;color:#ff4e00">V(miller)</div>
<div id="bline"></div>
<div id="status"><span style="left:2px;letter-spacing:-0.6px;word-spacing:1.8px">x = 946.490KHz</span><span style="left:94px;letter-spacing:-0.55px;word-spacing:1.8px">y = -61.172dB</span><span style="right:4px">Alternate</span></div>

</body></html>
